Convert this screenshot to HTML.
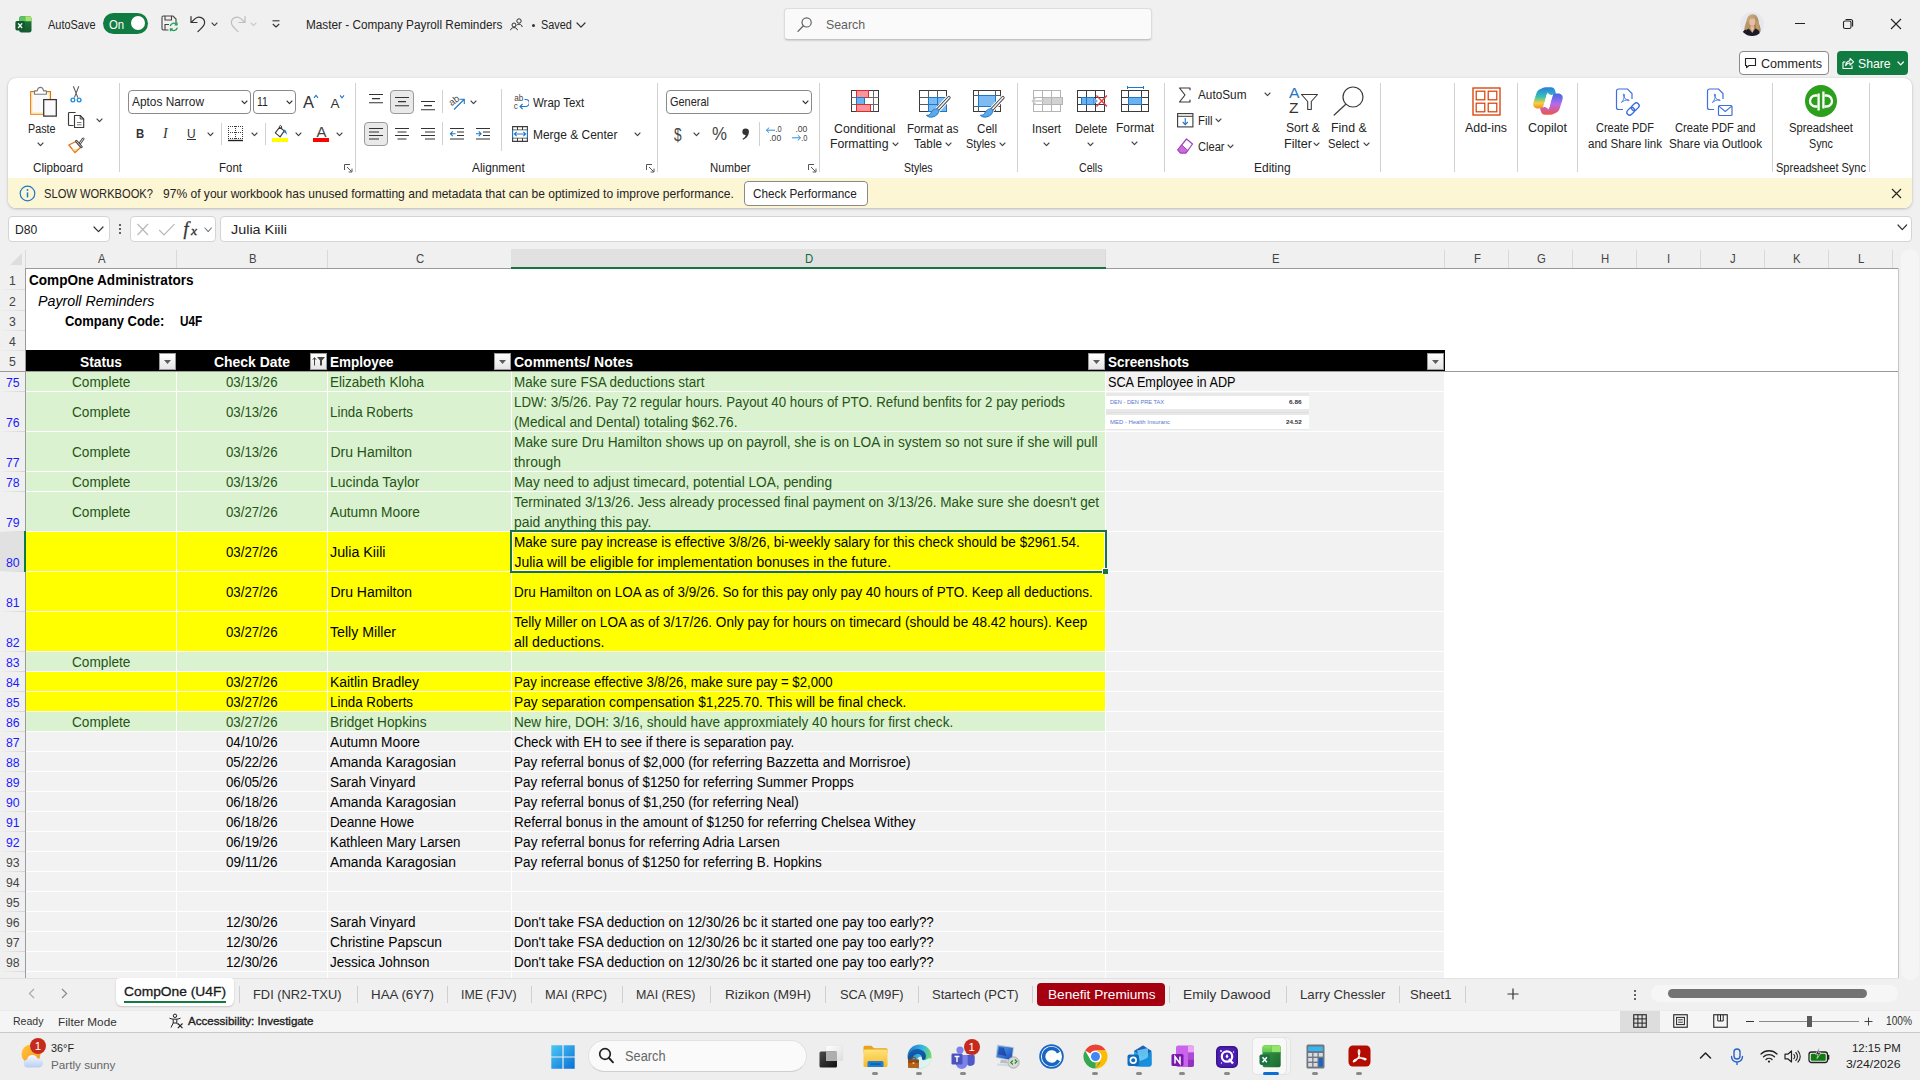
<!DOCTYPE html>
<html><head><meta charset="utf-8"><title>Excel</title><style>
html,body{margin:0;padding:0;}
body{width:1920px;height:1080px;overflow:hidden;background:#F0F0F0;position:relative;font-family:"Liberation Sans",sans-serif;}
.b{position:absolute;display:block;}
.t{position:absolute;white-space:nowrap;transform-origin:0 50%;}
</style></head><body>
<!-- title -->
<svg class="b" style="left:15px;top:15.5px;" width="17" height="17" viewBox="0 0 17 17">
<defs><linearGradient id="xlg" x1="0" y1="0" x2="0" y2="1"><stop offset="0" stop-color="#21803F"/><stop offset="1" stop-color="#17582F"/></linearGradient></defs>
<rect x="4.2" y="0.3" width="12.3" height="16.2" rx="2.2" fill="url(#xlg)"/>
<path d="M4.2 2.500A2.200 2.200 0 0 1 6.400 0.300H10.300V5.300H4.200Z" fill="#5DC466"/>
<path d="M10.300 0.300H14.300A2.200 2.200 0 0 1 16.500 2.500V5.300H10.300Z" fill="#A9E26E"/>
<rect x="0.400" y="5" width="9.400" height="9.400" rx="1.600" fill="#0F5B2E"/>
<path d="M3.100 7.400L7.100 12M7.100 7.400L3.100 12" stroke="#fff" stroke-width="1.350"/>
</svg>
<div class="t" style="left:48.00px;top:18px;font-size:12px;line-height:15px;color:#242424;transform:scaleX(0.9128);">AutoSave</div>
<div class="b" style="left:103px;top:13px;width:45px;height:21px;background:#107C41;border-radius:10.5px;"></div>
<div class="t" style="left:109.40px;top:17px;font-size:12.6px;line-height:16px;color:#fff;transform:scaleX(0.9043);">On</div>
<div class="b" style="left:131.3px;top:16px;width:14px;height:14px;background:#fff;border-radius:7px;"></div>
<svg class="b" style="left:160px;top:14px;" width="20" height="20" viewBox="0 0 20 20">
<path d="M2 3.2A1.2 1.2 0 0 1 3.2 2H13L16 5V9" fill="none" stroke="#444" stroke-width="1.1"/>
<path d="M2 3.2V14.8A1.2 1.2 0 0 0 3.2 16H8.5" fill="none" stroke="#444" stroke-width="1.1"/>
<path d="M5 2V6H11.5V2" fill="none" stroke="#444" stroke-width="1.1"/>
<path d="M5 16V10.5H9" fill="none" stroke="#444" stroke-width="1.1"/>
<path d="M10.2 12.2A3.6 3.6 0 0 1 16.6 10.6M17 8.6V10.9H14.7" fill="none" stroke="#1E9E55" stroke-width="1.3"/>
<path d="M17.3 13.6A3.6 3.6 0 0 1 10.9 15.2M10.5 17.2V14.9H12.8" fill="none" stroke="#1E9E55" stroke-width="1.3"/>
</svg>
<svg class="b" style="left:189px;top:14px;" width="18" height="20" viewBox="0 0 18 20"><path d="M2 2.5V8.5H8" fill="none" stroke="#333" stroke-width="1.2" stroke-linecap="round" stroke-linejoin="round"/><path d="M2.3 8.2L6.2 4.6A5.6 5.6 0 0 1 15.6 8.8C15.6 12 13 13.6 9 17.5" fill="none" stroke="#333" stroke-width="1.2" stroke-linecap="round"/></svg>
<svg class="b" style="left:211.0px;top:21.5px;" width="7" height="4.6" viewBox="0 0 7 4.6"><path d="M1 1L3.5 3.6L6 1" fill="none" stroke="#444" stroke-width="1.1" stroke-linecap="round" stroke-linejoin="round"/></svg>
<svg class="b" style="left:229px;top:14px;" width="18" height="20" viewBox="0 0 18 20"><path d="M16 2.5V8.5H10" fill="none" stroke="#BDBDBD" stroke-width="1.2" stroke-linecap="round" stroke-linejoin="round"/><path d="M15.7 8.2L11.8 4.6A5.6 5.6 0 0 0 2.4 8.8C2.4 12 5 13.6 9 17.5" fill="none" stroke="#BDBDBD" stroke-width="1.2" stroke-linecap="round"/></svg>
<svg class="b" style="left:250.0px;top:21.5px;" width="7" height="4.6" viewBox="0 0 7 4.6"><path d="M1 1L3.5 3.6L6 1" fill="none" stroke="#C8C8C8" stroke-width="1.1" stroke-linecap="round" stroke-linejoin="round"/></svg>
<svg class="b" style="left:270px;top:19px;" width="12" height="10" viewBox="0 0 12 10"><path d="M2.5 1.8H9.5" stroke="#333" stroke-width="1.1"/><path d="M2.8 5L6 8L9.2 5" fill="none" stroke="#333" stroke-width="1.1" stroke-linejoin="round"/></svg>
<div class="t" style="left:305.50px;top:18px;font-size:12.0px;line-height:15px;color:#242424;transform:scaleX(0.9812);">Master - Company Payroll Reminders</div>
<svg class="b" style="left:509px;top:17px;" width="15" height="14" viewBox="0 0 15 14"><circle cx="10" cy="4" r="2.2" fill="none" stroke="#333" stroke-width="1"/><path d="M7.6 8.5C8.2 7.6 9 7.2 10 7.2C12 7.2 13 8.6 13.2 10" fill="none" stroke="#333" stroke-width="1"/><circle cx="5" cy="8" r="2" fill="none" stroke="#333" stroke-width="1"/><path d="M1.6 13.2C1.8 11.4 3.2 10.6 5 10.6C6.8 10.6 8.2 11.4 8.4 13.2" fill="none" stroke="#333" stroke-width="1"/></svg>
<div class="b" style="left:531.5px;top:24px;width:3px;height:3px;background:#333;border-radius:2px;"></div>
<div class="t" style="left:541.00px;top:18px;font-size:12.0px;line-height:15px;color:#242424;transform:scaleX(0.9052);">Saved</div>
<svg class="b" style="left:576.4px;top:21.7px;" width="10" height="6.2" viewBox="0 0 10 6.2"><path d="M1 1L5.0 5.2L9 1" fill="none" stroke="#333" stroke-width="1.2" stroke-linecap="round" stroke-linejoin="round"/></svg>
<div class="b" style="left:784px;top:8px;width:368px;height:32px;background:#FAFAFA;border:1px solid #DDD;border-bottom-color:#C4C4C4;border-radius:4px;box-sizing:border-box;box-shadow:0 1px 1.5px rgba(0,0,0,0.12);"></div>
<svg class="b" style="left:796px;top:16px;" width="18" height="17" viewBox="0 0 18 17"><circle cx="10.6" cy="6.4" r="4.6" fill="none" stroke="#616161" stroke-width="1.2"/><path d="M7.4 9.8L2 15.4" stroke="#616161" stroke-width="1.3" stroke-linecap="round"/></svg>
<div class="t" style="left:825.80px;top:16px;font-size:13.4px;line-height:17px;color:#616161;transform:scaleX(0.9233);">Search</div>
<svg class="b" style="left:1740px;top:12px;" width="24" height="24" viewBox="0 0 24 24"><defs><clipPath id="av"><circle cx="12" cy="12" r="12"/></clipPath>
<linearGradient id="hr" x1="0" y1="0" x2="1" y2="1"><stop offset="0" stop-color="#D6B682"/><stop offset="1" stop-color="#8E6E48"/></linearGradient></defs>
<g clip-path="url(#av)"><rect width="24" height="24" fill="#E7E8EF"/>
<path d="M4.500 20C3.800 16 5 13 6.200 10C7 5 9 2.200 12.600 2.200C16.500 2.200 18.300 5.500 18.600 9.500C19 13 21 15 20.500 19.500L15 21L9 21Z" fill="url(#hr)"/>
<ellipse cx="12.300" cy="9.800" rx="3" ry="4" fill="#E6BEA6"/>
<path d="M8.900 8.600C9.400 5.400 14.400 4.400 15.700 8.200C14.200 6.800 11.200 6.600 8.900 8.600Z" fill="#CDAA78"/>
<path d="M10.800 13.200H13.800L14.200 17H10.400Z" fill="#DDB199"/>
<path d="M1.500 24C2 19.500 4.500 17.600 8.600 16.600L12.300 21L15.400 16.400C18.500 17.400 20 19.500 20.500 24Z" fill="#1A1B27"/>
<path d="M10.300 15.600L12.300 20.400L14.300 15.400Z" fill="#E6BEA6"/>
<path d="M6.200 10C5.500 13.500 6.800 15.500 6 18.500L8.600 16.600C8.200 14 8.600 12 8.900 9.500Z" fill="#B99563" opacity="0.900"/>
<path d="M15.800 9C16.200 12 15.600 14 16.200 16.600L19.800 18.500C20 15.500 18.600 13 18.600 9.500Z" fill="#C19D6A" opacity="0.900"/></g></svg>
<div class="b" style="left:1795px;top:23px;width:10px;height:1px;background:#222;"></div>
<svg class="b" style="left:1842px;top:18px;" width="12" height="12" viewBox="0 0 12 12"><rect x="1.5" y="3" width="7.5" height="7.5" rx="1.6" fill="none" stroke="#222" stroke-width="1.1"/><path d="M3.6 1.5H8.6A2 2 0 0 1 10.6 3.5V8.5" fill="none" stroke="#222" stroke-width="1.1"/></svg>
<svg class="b" style="left:1890px;top:18px;" width="12" height="12" viewBox="0 0 12 12"><path d="M1 1L11 11M11 1L1 11" stroke="#222" stroke-width="1.1"/></svg>
<div class="b" style="left:1739px;top:51px;width:90px;height:24px;background:#fff;border:1px solid #8A8A8A;border-radius:4px;box-sizing:border-box;"></div>
<svg class="b" style="left:1743.5px;top:57px;" width="13" height="12" viewBox="0 0 13 12"><path d="M1.5 1.5H11.5V8.5H5L2.6 10.6V8.5H1.5Z" fill="none" stroke="#222" stroke-width="1.1" stroke-linejoin="round"/></svg>
<div class="t" style="left:1760.60px;top:55px;font-size:13.4px;line-height:17px;color:#242424;transform:scaleX(0.9416);">Comments</div>
<div class="b" style="left:1837px;top:51px;width:71px;height:24px;background:#107C41;border-radius:4px;"></div>
<svg class="b" style="left:1841px;top:56px;" width="14" height="14" viewBox="0 0 14 14"><path d="M2 6V12.5H11V9.5" fill="none" stroke="#fff" stroke-width="1.1"/><path d="M2 6H4.4" stroke="#fff" stroke-width="1.1"/><path d="M4.6 9.6C5 6.6 6.6 5 9 4.8V2.4L12.6 5.8L9 9.2V6.8C7.2 6.9 5.8 7.8 4.6 9.6Z" fill="none" stroke="#fff" stroke-width="1.05" stroke-linejoin="round"/></svg>
<div class="t" style="left:1858.00px;top:55px;font-size:13.4px;line-height:17px;color:#fff;transform:scaleX(0.9117);">Share</div>
<svg class="b" style="left:1896.8999999999999px;top:61.2px;" width="7.4" height="4.8" viewBox="0 0 7.4 4.8"><path d="M1 1L3.7 3.8L6.4 1" fill="none" stroke="#fff" stroke-width="1.2" stroke-linecap="round" stroke-linejoin="round"/></svg>
<!-- ribbon -->
<div class="b" style="left:8px;top:78px;width:1904px;height:130px;background:#fff;border-radius:8px;box-shadow:0 1px 3px rgba(0,0,0,0.22),0 0 1px rgba(0,0,0,0.15);"></div>
<div class="b" style="left:8px;top:178px;width:1904px;height:30px;background:#FDF6D5;border-radius:0 0 8px 8px;"></div>
<svg class="b" style="left:29px;top:86px;" width="30" height="32" viewBox="0 0 30 32">
<path d="M21.500 13V5.600H1.700V28.200H14.500" fill="#FAFAFA" stroke="#E6720F" stroke-width="1.150"/>
<path d="M20.400 13V6.700H2.800V27.100H14.500" fill="none" stroke="#FBDF98" stroke-width="1.050"/>
<path d="M5.500 8.300V4.900H8.200C8.600 2.500 10 1.400 11.400 1.400C12.800 1.400 14.200 2.500 14.600 4.900H17.400V8.300Z" fill="#fff" stroke="#7A7A7A" stroke-width="1.100" stroke-linejoin="round"/>
<rect x="14.700" y="13.600" width="12.600" height="16.500" fill="#FAFAFA" stroke="#333" stroke-width="1.250"/>
</svg>
<div class="t" style="left:27.50px;top:122px;font-size:12.3px;line-height:15px;color:#242424;transform:scaleX(0.8743);">Paste</div>
<svg class="b" style="left:37.0px;top:142.0px;" width="7" height="4.6" viewBox="0 0 7 4.6"><path d="M1 1L3.5 3.6L6 1" fill="none" stroke="#444" stroke-width="1.1" stroke-linecap="round" stroke-linejoin="round"/></svg>
<svg class="b" style="left:69px;top:85px;" width="14" height="19" viewBox="0 0 14 19"><path d="M4.400 1.200L8.800 12.600M9.800 1.200L5.400 12.600" stroke="#5A5A5A" stroke-width="1.050" fill="none"/><circle cx="3.900" cy="15" r="1.850" fill="none" stroke="#1E8FD8" stroke-width="1.350"/><circle cx="10.100" cy="15" r="1.850" fill="none" stroke="#1E8FD8" stroke-width="1.350"/></svg>
<svg class="b" style="left:67px;top:111px;" width="18" height="18" viewBox="0 0 18 18"><path d="M8.600 1.500H2.400A0.900 0.900 0 0 0 1.500 2.400V13.600A0.900 0.900 0 0 0 2.400 14.500H6.500" fill="none" stroke="#3B3B3B" stroke-width="1.150"/><path d="M7.500 4.500H13.200L16.700 8V16.500H7.500Z" fill="#fff" stroke="#3B3B3B" stroke-width="1.150" stroke-linejoin="round"/><path d="M13.200 4.500V8H16.700" fill="none" stroke="#3B3B3B" stroke-width="1"/><path d="M10 11.500H14.500M10 13.800H14.500" stroke="#6A6A6A" stroke-width="0.900"/></svg>
<svg class="b" style="left:96.0px;top:118.10000000000001px;" width="7" height="4.6" viewBox="0 0 7 4.6"><path d="M1 1L3.5 3.6L6 1" fill="none" stroke="#444" stroke-width="1.1" stroke-linecap="round" stroke-linejoin="round"/></svg>
<svg class="b" style="left:68px;top:137px;" width="17" height="17" viewBox="0 0 17 17"><path d="M0.900 8L7.800 4.500L12.800 10.200L7 15.600Z" fill="#fff" stroke="#E6720F" stroke-width="1.300" stroke-linejoin="round"/><path d="M4.200 12.200L7 14.600L10.200 11.600Z" fill="#FBDF98"/><path d="M15.200 1.800L11.800 6.600" stroke="#4A4A4A" stroke-width="2.600" stroke-linecap="round"/><path d="M15.200 1.800L11.800 6.600" stroke="#F2F2F2" stroke-width="0.900" stroke-linecap="round"/><path d="M8.300 4.200L13.400 9.800" stroke="#4A4A4A" stroke-width="2.600" stroke-linecap="round"/><path d="M8.500 4.400L13.200 9.600" stroke="#DADADA" stroke-width="0.800" stroke-linecap="round"/></svg>
<div class="t" style="left:32.50px;top:161px;font-size:12.3px;line-height:15px;color:#242424;transform:scaleX(0.9497);">Clipboard</div>
<div class="b" style="left:119px;top:83px;width:1px;height:89px;background:#D2D2D2;"></div>
<div class="b" style="left:128px;top:90px;width:123px;height:24px;background:#fff;border:1px solid #8A8A8A;border-radius:4px;box-sizing:border-box;"></div>
<div class="t" style="left:131.80px;top:94px;font-size:12.6px;line-height:16px;color:#242424;transform:scaleX(0.9433);">Aptos Narrow</div>
<svg class="b" style="left:240.8px;top:100.10000000000001px;" width="7" height="4.6" viewBox="0 0 7 4.6"><path d="M1 1L3.5 3.6L6 1" fill="none" stroke="#333" stroke-width="1.1" stroke-linecap="round" stroke-linejoin="round"/></svg>
<div class="b" style="left:253px;top:90px;width:43px;height:24px;background:#fff;border:1px solid #8A8A8A;border-radius:4px;box-sizing:border-box;"></div>
<div class="t" style="left:256.80px;top:94px;font-size:12.6px;line-height:16px;color:#242424;transform:scaleX(0.8257);">11</div>
<svg class="b" style="left:285.8px;top:100.10000000000001px;" width="7" height="4.6" viewBox="0 0 7 4.6"><path d="M1 1L3.5 3.6L6 1" fill="none" stroke="#333" stroke-width="1.1" stroke-linecap="round" stroke-linejoin="round"/></svg>
<div class="t" style="left:303.00px;top:93px;font-size:16px;line-height:20px;color:#333;transform:scaleX(1.0307);">A</div>
<svg class="b" style="left:313.2px;top:94px;" width="6" height="5" viewBox="0 0 6 5"><path d="M1 3.800L3 1.400L5 3.800" fill="none" stroke="#1E78C8" stroke-width="1.1"/></svg>
<div class="t" style="left:330.50px;top:95px;font-size:13.5px;line-height:17px;color:#333;">A</div>
<svg class="b" style="left:339.4px;top:94px;" width="6" height="5" viewBox="0 0 6 5"><path d="M1 1.400L3 3.800L5 1.400" fill="none" stroke="#1E78C8" stroke-width="1.1"/></svg>
<div class="t" style="left:136.20px;top:125px;font-size:13.2px;line-height:17px;color:#333;font-weight:bold;transform:scaleX(0.8602);">B</div>
<div class="t" style="left:163.00px;top:125px;font-size:14px;line-height:18px;color:#333;font-style:italic;font-family:'Liberation Serif',serif;">I</div>
<div class="t" style="left:187.00px;top:126px;font-size:12.6px;line-height:16px;color:#333;transform:scaleX(0.9451);">U</div>
<div class="b" style="left:187px;top:139.2px;width:9px;height:1px;background:#333;"></div>
<svg class="b" style="left:207.0px;top:132.0px;" width="7" height="4.6" viewBox="0 0 7 4.6"><path d="M1 1L3.5 3.6L6 1" fill="none" stroke="#444" stroke-width="1.1" stroke-linecap="round" stroke-linejoin="round"/></svg>
<div class="b" style="left:221px;top:123px;width:1px;height:22px;background:#D2D2D2;"></div>
<svg class="b" style="left:228px;top:126px;" width="16" height="16" viewBox="0 0 16 16"><path d="M0 0.500H15M0 6.500H15M0.500 0V13M7.500 0V13M14.500 0V13M0 12.500H15" stroke="#3B3B3B" stroke-width="1" stroke-dasharray="1 1" fill="none"/><path d="M0 14.500H15" stroke="#222" stroke-width="1.400"/></svg>
<svg class="b" style="left:251.0px;top:132.0px;" width="7" height="4.6" viewBox="0 0 7 4.6"><path d="M1 1L3.5 3.6L6 1" fill="none" stroke="#444" stroke-width="1.1" stroke-linecap="round" stroke-linejoin="round"/></svg>
<div class="b" style="left:265px;top:123px;width:1px;height:22px;background:#D2D2D2;"></div>
<svg class="b" style="left:272px;top:124px;" width="16" height="14" viewBox="0 0 16 14"><path d="M7.500 3.300L12.300 6.900L8.100 12.900L3.300 8.900Z" fill="#fff" stroke="#3B3B3B" stroke-width="1.100" stroke-linejoin="round"/><path d="M7.600 3.300C7.200 1.600 8.600 0.800 9.400 2L9.800 4.800" fill="none" stroke="#3B3B3B" stroke-width="1"/><path d="M11.600 5.600C13.800 5.800 15 7.600 14.600 11C14 9.400 13.200 8.600 12.300 8.400Z" fill="#1E78C8"/></svg>
<div class="b" style="left:272px;top:138px;width:16px;height:4px;background:#FFFF00;"></div>
<svg class="b" style="left:294.8px;top:132.0px;" width="7" height="4.6" viewBox="0 0 7 4.6"><path d="M1 1L3.5 3.6L6 1" fill="none" stroke="#444" stroke-width="1.1" stroke-linecap="round" stroke-linejoin="round"/></svg>
<div class="t" style="left:316.40px;top:122px;font-size:15px;line-height:19px;color:#444;">A</div>
<div class="b" style="left:313px;top:138px;width:16px;height:4px;background:#FF0000;"></div>
<svg class="b" style="left:335.8px;top:132.0px;" width="7" height="4.6" viewBox="0 0 7 4.6"><path d="M1 1L3.5 3.6L6 1" fill="none" stroke="#444" stroke-width="1.1" stroke-linecap="round" stroke-linejoin="round"/></svg>
<div class="t" style="left:218.80px;top:161px;font-size:12.3px;line-height:15px;color:#242424;transform:scaleX(0.9345);">Font</div>
<svg class="b" style="left:344px;top:164px;" width="9" height="9" viewBox="0 0 9 9"><path d="M0.5 6V0.5H6" fill="none" stroke="#555" stroke-width="1"/><path d="M3 3L7.6 7.6M4.6 8H8V4.6" fill="none" stroke="#555" stroke-width="1"/></svg>
<div class="b" style="left:355px;top:83px;width:1px;height:89px;background:#D2D2D2;"></div>
<div class="b" style="left:390px;top:90px;width:24px;height:24px;background:#E9E9E9;border:1px solid #9A9A9A;border-radius:4px;box-sizing:border-box;"></div>
<div class="b" style="left:364px;top:122px;width:24px;height:24px;background:#E9E9E9;border:1px solid #9A9A9A;border-radius:4px;box-sizing:border-box;"></div>
<svg class="b" style="left:368px;top:92px;" width="16" height="14" viewBox="0 0 16 14"><path d="M1 2.5H15M4 6.6H12M1 10.7H15" stroke="#333" stroke-width="1.1" fill="none"/></svg>
<svg class="b" style="left:394px;top:95px;" width="16" height="14" viewBox="0 0 16 14"><path d="M1 2.5H15M4 6.6H12M1 10.7H15" stroke="#333" stroke-width="1.1" fill="none"/></svg>
<svg class="b" style="left:420px;top:99px;" width="16" height="14" viewBox="0 0 16 14"><path d="M1 2.5H15M4 6.6H12M1 10.7H15" stroke="#333" stroke-width="1.1" fill="none"/></svg>
<div class="b" style="left:442px;top:90px;width:1px;height:23px;background:#D2D2D2;"></div>
<svg class="b" style="left:448px;top:92px;" width="19" height="20" viewBox="0 0 19 20"><g transform="rotate(-38 7 8)"><text x="0.500" y="11" font-family="Liberation Sans" font-size="9.5" fill="#444">ab</text></g><path d="M6 17.500L16 7.500M11.500 7.200H16.300V12" fill="none" stroke="#1E78C8" stroke-width="1.1"/></svg>
<svg class="b" style="left:470.0px;top:100.10000000000001px;" width="7" height="4.6" viewBox="0 0 7 4.6"><path d="M1 1L3.5 3.6L6 1" fill="none" stroke="#444" stroke-width="1.1" stroke-linecap="round" stroke-linejoin="round"/></svg>
<div class="b" style="left:501px;top:89px;width:1px;height:62px;background:#D2D2D2;"></div>
<svg class="b" style="left:513px;top:94px;" width="16" height="17" viewBox="0 0 16 17"><text x="1.200" y="7" font-family="Liberation Sans" font-size="8.200" fill="#444">ab</text><text x="0.800" y="14.600" font-family="Liberation Sans" font-size="8.200" fill="#444">c</text><path d="M11.500 5.500H12.800A2.300 2.300 0 0 1 12.800 12.500H7.200M9.600 10L7 12.500L9.600 15" fill="none" stroke="#1E78C8" stroke-width="1.1"/></svg>
<div class="t" style="left:532.60px;top:96px;font-size:12.3px;line-height:15px;color:#242424;transform:scaleX(0.9323);">Wrap Text</div>
<svg class="b" style="left:368px;top:127px;" width="16" height="14" viewBox="0 0 16 14"><path d="M1 1.5H15M1 5H11M1 8.5H15M1 12H11" stroke="#333" stroke-width="1.1" fill="none"/></svg>
<svg class="b" style="left:394px;top:127px;" width="16" height="14" viewBox="0 0 16 14"><path d="M1 1.5H15M3.5 5H12.5M1 8.5H15M3.5 12H12.5" stroke="#333" stroke-width="1.1" fill="none"/></svg>
<svg class="b" style="left:420px;top:127px;" width="16" height="14" viewBox="0 0 16 14"><path d="M1 1.5H15M5 5H15M1 8.5H15M5 12H15" stroke="#333" stroke-width="1.1" fill="none"/></svg>
<div class="b" style="left:442px;top:122px;width:1px;height:23px;background:#D2D2D2;"></div>
<svg class="b" style="left:449px;top:127px;" width="16" height="14" viewBox="0 0 16 14"><path d="M1 1.5H15M8 5H15M8 8.5H15M1 12H15" stroke="#333" stroke-width="1.1" fill="none"/><path d="M6.500 6.750H1.500M3.800 4.400L1.400 6.750L3.800 9.100" fill="none" stroke="#1E78C8" stroke-width="1.1"/></svg>
<svg class="b" style="left:475px;top:127px;" width="16" height="14" viewBox="0 0 16 14"><path d="M1 1.5H15M8 5H15M8 8.5H15M1 12H15" stroke="#333" stroke-width="1.1" fill="none"/><path d="M1 6.750H6M3.700 4.400L6.100 6.750L3.700 9.100" fill="none" stroke="#1E78C8" stroke-width="1.1"/></svg>
<svg class="b" style="left:511.5px;top:125.5px;" width="16" height="16" viewBox="0 0 16 16"><path d="M0.600 0.600H15.400V15.400H0.600Z" fill="#fff" stroke="#3B3B3B" stroke-width="1.1"/><path d="M0.600 4H15.400M0.600 12H15.400M5.500 0.600V4M10.500 0.600V4M5.500 12V15.400M10.500 12V15.400" stroke="#3B3B3B" stroke-width="1" fill="none"/><rect x="1.200" y="4.500" width="13.600" height="7" fill="#fff"/><path d="M2.400 8H13.600M4.600 5.800L2.400 8L4.600 10.200M11.400 5.800L13.600 8L11.400 10.200" fill="none" stroke="#1E78C8" stroke-width="1.1"/><path d="M0.600 4V12M15.400 4V12" stroke="#1E78C8" stroke-width="1.1"/></svg>
<div class="t" style="left:532.60px;top:128px;font-size:12.3px;line-height:15px;color:#242424;transform:scaleX(0.9721);">Merge &amp; Center</div>
<svg class="b" style="left:634.1px;top:132.0px;" width="7" height="4.6" viewBox="0 0 7 4.6"><path d="M1 1L3.5 3.6L6 1" fill="none" stroke="#444" stroke-width="1.1" stroke-linecap="round" stroke-linejoin="round"/></svg>
<div class="t" style="left:472.00px;top:161px;font-size:12.3px;line-height:15px;color:#242424;transform:scaleX(0.9635);">Alignment</div>
<svg class="b" style="left:646px;top:164px;" width="9" height="9" viewBox="0 0 9 9"><path d="M0.5 6V0.5H6" fill="none" stroke="#555" stroke-width="1"/><path d="M3 3L7.6 7.6M4.6 8H8V4.6" fill="none" stroke="#555" stroke-width="1"/></svg>
<div class="b" style="left:657px;top:83px;width:1px;height:89px;background:#D2D2D2;"></div>
<div class="b" style="left:666px;top:90px;width:146px;height:24px;background:#fff;border:1px solid #8A8A8A;border-radius:4px;box-sizing:border-box;"></div>
<div class="t" style="left:669.70px;top:94px;font-size:12.6px;line-height:16px;color:#242424;transform:scaleX(0.8700);">General</div>
<svg class="b" style="left:801.5px;top:100.10000000000001px;" width="7" height="4.6" viewBox="0 0 7 4.6"><path d="M1 1L3.5 3.6L6 1" fill="none" stroke="#333" stroke-width="1.1" stroke-linecap="round" stroke-linejoin="round"/></svg>
<div class="t" style="left:673.60px;top:123px;font-size:18.5px;line-height:23px;color:#444;transform:scaleX(0.7387);">$</div>
<svg class="b" style="left:692.5px;top:132.0px;" width="7" height="4.6" viewBox="0 0 7 4.6"><path d="M1 1L3.5 3.6L6 1" fill="none" stroke="#444" stroke-width="1.1" stroke-linecap="round" stroke-linejoin="round"/></svg>
<div class="t" style="left:711.50px;top:123px;font-size:17.5px;line-height:22px;color:#444;transform:scaleX(0.9640);">%</div>
<svg class="b" style="left:741px;top:128px;" width="9" height="13" viewBox="0 0 9 13"><path d="M4.600 0.500A3.300 3.300 0 0 1 7.900 3.800C7.900 7.500 5.200 10.500 2 11.800L1.500 10.800C3.500 9.800 4.600 8.400 4.700 7.100A3.300 3.300 0 0 1 4.600 0.500Z" fill="#333"/></svg>
<div class="b" style="left:759px;top:122px;width:1px;height:24px;background:#D2D2D2;"></div>
<svg class="b" style="left:765px;top:125px;" width="18" height="18" viewBox="0 0 18 18"><path d="M10 5.200H1.500M4.200 2.600L1.400 5.200L4.200 7.800" fill="none" stroke="#2B8FDA" stroke-width="1"/><text x="10.400" y="7.400" font-family="Liberation Sans" font-size="8.800" fill="#444" textLength="6.200" lengthAdjust="spacingAndGlyphs">.0</text><text x="4.200" y="15.800" font-family="Liberation Sans" font-size="8.800" fill="#444" textLength="12" lengthAdjust="spacingAndGlyphs">.00</text></svg>
<svg class="b" style="left:791px;top:125px;" width="18" height="18" viewBox="0 0 18 18"><text x="4.400" y="7.400" font-family="Liberation Sans" font-size="8.800" fill="#444" textLength="12" lengthAdjust="spacingAndGlyphs">.00</text><path d="M1 12.800H9.500M6.800 10.200L9.600 12.800L6.800 15.400" fill="none" stroke="#2B8FDA" stroke-width="1"/><text x="10.200" y="15.800" font-family="Liberation Sans" font-size="8.800" fill="#444" textLength="6.200" lengthAdjust="spacingAndGlyphs">.0</text></svg>
<div class="t" style="left:710.40px;top:161px;font-size:12.3px;line-height:15px;color:#242424;transform:scaleX(0.9281);">Number</div>
<svg class="b" style="left:808px;top:164px;" width="9" height="9" viewBox="0 0 9 9"><path d="M0.5 6V0.5H6" fill="none" stroke="#555" stroke-width="1"/><path d="M3 3L7.6 7.6M4.6 8H8V4.6" fill="none" stroke="#555" stroke-width="1"/></svg>
<div class="b" style="left:819px;top:83px;width:1px;height:89px;background:#D2D2D2;"></div>
<svg class="b" style="left:851px;top:90px;" width="28" height="22" viewBox="0 0 28 22"><rect x="0.5" y="0.5" width="27" height="21" fill="#fff" stroke="#3B3B3B"/>
<path d="M5.5 0.5V21.5M17.5 0.5V21.5M22.5 0.5V21.5M0.5 7.5H27.5M0.5 14.5H27.5" stroke="#6A6A6A" stroke-width="1" fill="none"/>
<rect x="5.5" y="0.5" width="12" height="7" fill="#F9939C" stroke="#E02B2B"/>
<rect x="13.5" y="8" width="8.5" height="6" fill="#fff"/>
<rect x="5.5" y="7.5" width="8" height="7" fill="#6CB2EE" stroke="#1E78C8"/>
<rect x="5.5" y="14.5" width="14" height="7" fill="#F9939C" stroke="#E02B2B"/></svg>
<div class="t" style="left:834.00px;top:122px;font-size:12.3px;line-height:15px;color:#242424;">Conditional</div>
<div class="t" style="left:830.00px;top:137px;font-size:12.3px;line-height:15px;color:#242424;transform:scaleX(0.9951);">Formatting</div>
<svg class="b" style="left:892.1px;top:142.29999999999998px;" width="7" height="4.6" viewBox="0 0 7 4.6"><path d="M1 1L3.5 3.6L6 1" fill="none" stroke="#444" stroke-width="1.1" stroke-linecap="round" stroke-linejoin="round"/></svg>
<svg class="b" style="left:919px;top:90px;" width="33" height="29" viewBox="0 0 33 29"><rect x="0.5" y="0.5" width="27" height="21" fill="#fff" stroke="#3B3B3B"/><path d="M0.5 7.5H27.5M0.5 14.5H9.5M9.5 0.5V21.5M18.5 0.5V7.5" stroke="#5A5A5A" stroke-width="1" fill="none"/><rect x="9.5" y="7.5" width="18" height="14" fill="#7DBBF0" stroke="#1E78C8"/><path d="M9.5 14.5H27.5M18.5 7.5V21.5" stroke="#1E78C8" stroke-width="1" fill="none"/><path d="M30 7.600L18.600 19.800" stroke="#fff" stroke-width="5.400" stroke-linecap="round" fill="none"/><path d="M30 7.600L18.400 20" stroke="#4A4A4A" stroke-width="3.300" stroke-linecap="round" fill="none"/><path d="M30 7.600L18.400 20" stroke="#F4F4F4" stroke-width="1.500" stroke-linecap="round" fill="none"/><path d="M19.400 19.400C20.600 22 18.400 26 13.400 27C10.800 27.500 8.600 26.700 7.400 25.300C10.400 25.500 11.500 24 12.400 22C13.500 19.600 17 18 19.400 19.400Z" fill="#5BA8EA" stroke="#1E78C8" stroke-width="1"/></svg>
<div class="t" style="left:907.40px;top:122px;font-size:12.3px;line-height:15px;color:#242424;transform:scaleX(0.9284);">Format as</div>
<div class="t" style="left:914.00px;top:137px;font-size:12.3px;line-height:15px;color:#242424;transform:scaleX(0.9522);">Table</div>
<svg class="b" style="left:945.0px;top:142.29999999999998px;" width="7" height="4.6" viewBox="0 0 7 4.6"><path d="M1 1L3.5 3.6L6 1" fill="none" stroke="#444" stroke-width="1.1" stroke-linecap="round" stroke-linejoin="round"/></svg>
<svg class="b" style="left:973px;top:90px;" width="33" height="29" viewBox="0 0 33 29"><rect x="0.5" y="0.5" width="27" height="21" fill="#fff" stroke="#3B3B3B"/><path d="M0.5 5.5H27.5M0.5 16.5H27.5M5.5 0.5V21.5M22.5 0.5V21.5" stroke="#5A5A5A" stroke-width="1" fill="none"/><rect x="5.5" y="5.5" width="17" height="11" fill="#7DBBF0" stroke="#1E78C8"/><path d="M30 7.600L18.600 19.800" stroke="#fff" stroke-width="5.400" stroke-linecap="round" fill="none"/><path d="M30 7.600L18.400 20" stroke="#4A4A4A" stroke-width="3.300" stroke-linecap="round" fill="none"/><path d="M30 7.600L18.400 20" stroke="#F4F4F4" stroke-width="1.500" stroke-linecap="round" fill="none"/><path d="M19.400 19.400C20.600 22 18.400 26 13.400 27C10.800 27.500 8.600 26.700 7.400 25.300C10.400 25.500 11.500 24 12.400 22C13.500 19.600 17 18 19.400 19.400Z" fill="#5BA8EA" stroke="#1E78C8" stroke-width="1"/></svg>
<div class="t" style="left:977.00px;top:122px;font-size:12.3px;line-height:15px;color:#242424;transform:scaleX(0.9439);">Cell</div>
<div class="t" style="left:966.00px;top:137px;font-size:12.3px;line-height:15px;color:#242424;transform:scaleX(0.8837);">Styles</div>
<svg class="b" style="left:999.0px;top:142.29999999999998px;" width="7" height="4.6" viewBox="0 0 7 4.6"><path d="M1 1L3.5 3.6L6 1" fill="none" stroke="#444" stroke-width="1.1" stroke-linecap="round" stroke-linejoin="round"/></svg>
<div class="t" style="left:904.00px;top:161px;font-size:12.3px;line-height:15px;color:#242424;transform:scaleX(0.8539);">Styles</div>
<div class="b" style="left:1017px;top:83px;width:1px;height:89px;background:#D2D2D2;"></div>
<svg class="b" style="left:1031px;top:90px;" width="33" height="22" viewBox="0 0 33 22"><rect x="2.5" y="0.5" width="27" height="21" fill="#fff" stroke="#B4B4B4"/><path d="M2.5 7.5H29.5M2.5 14.5H29.5M11.5 0.5V21.5M20.5 0.5V21.5" stroke="#B4B4B4" stroke-width="1" fill="none"/><rect x="11.5" y="7.5" width="20" height="7" fill="#D2D2D2" stroke="#B4B4B4"/><path d="M20.5 7.5V14.5" stroke="#B4B4B4" stroke-width="1" fill="none"/><path d="M13 11H1.500M5.500 7L1.300 11L5.500 15" fill="none" stroke="#C8C8C8" stroke-width="1.300"/></svg>
<div class="t" style="left:1032.00px;top:122px;font-size:12.3px;line-height:15px;color:#242424;transform:scaleX(0.9427);">Insert</div>
<svg class="b" style="left:1042.7px;top:142.39999999999998px;" width="7" height="4.6" viewBox="0 0 7 4.6"><path d="M1 1L3.5 3.6L6 1" fill="none" stroke="#444" stroke-width="1.1" stroke-linecap="round" stroke-linejoin="round"/></svg>
<svg class="b" style="left:1077px;top:90px;" width="32" height="22" viewBox="0 0 32 22"><rect x="0.5" y="0.5" width="27" height="21" fill="#fff" stroke="#3B3B3B"/><path d="M0.5 7.5H27.5M0.5 14.5H27.5M9.5 0.5V21.5M18.5 0.5V21.5" stroke="#3B3B3B" stroke-width="1" fill="none"/><rect x="4.5" y="7.5" width="12" height="7" fill="#6CB2EE" stroke="#1E78C8"/><path d="M9.5 7.5V14.5" stroke="#1E78C8" fill="none"/><path d="M16.5 7.2L21 11L16.5 14.800Z" fill="#6CB2EE"/><path d="M19.5 5.500L30 16.500M30 5.500L19.500 16.500" stroke="#E03A3A" stroke-width="1.300"/></svg>
<div class="t" style="left:1074.60px;top:122px;font-size:12.3px;line-height:15px;color:#242424;transform:scaleX(0.9085);">Delete</div>
<svg class="b" style="left:1086.7px;top:142.39999999999998px;" width="7" height="4.6" viewBox="0 0 7 4.6"><path d="M1 1L3.5 3.6L6 1" fill="none" stroke="#444" stroke-width="1.1" stroke-linecap="round" stroke-linejoin="round"/></svg>
<svg class="b" style="left:1121px;top:85px;" width="30" height="27" viewBox="0 0 30 27"><path d="M6.500 1V4M22.500 1V4M6.500 2.500H22.500" stroke="#1E78C8" stroke-width="1" fill="none"/><rect x="0.5" y="5.5" width="27" height="21" fill="#fff" stroke="#3B3B3B"/><path d="M0.5 12.5H27.5M0.5 19.5H27.5M7.5 5.5V26.5M20.5 5.5V26.5" stroke="#3B3B3B" stroke-width="1" fill="none"/><rect x="7.5" y="12.5" width="13" height="7" fill="#6CB2EE" stroke="#1E78C8"/></svg>
<div class="t" style="left:1116.00px;top:121px;font-size:12.3px;line-height:15px;color:#242424;transform:scaleX(0.9755);">Format</div>
<svg class="b" style="left:1131.1px;top:141.39999999999998px;" width="7" height="4.6" viewBox="0 0 7 4.6"><path d="M1 1L3.5 3.6L6 1" fill="none" stroke="#444" stroke-width="1.1" stroke-linecap="round" stroke-linejoin="round"/></svg>
<div class="t" style="left:1079.00px;top:161px;font-size:12.3px;line-height:15px;color:#242424;transform:scaleX(0.8596);">Cells</div>
<div class="b" style="left:1164px;top:83px;width:1px;height:89px;background:#D2D2D2;"></div>
<svg class="b" style="left:1178px;top:87px;" width="14" height="16" viewBox="0 0 14 16"><path d="M12 3.200V1H1.500L7 8L1.500 15H12V12.800" fill="none" stroke="#3B3B3B" stroke-width="1.200" stroke-linejoin="round"/></svg>
<div class="t" style="left:1197.50px;top:88px;font-size:12.3px;line-height:15px;color:#242424;transform:scaleX(0.9586);">AutoSum</div>
<svg class="b" style="left:1263.8px;top:92.3px;" width="7" height="4.6" viewBox="0 0 7 4.6"><path d="M1 1L3.5 3.6L6 1" fill="none" stroke="#444" stroke-width="1.1" stroke-linecap="round" stroke-linejoin="round"/></svg>
<svg class="b" style="left:1176.5px;top:113px;" width="17" height="15" viewBox="0 0 17 15"><rect x="0.600" y="0.600" width="15.300" height="13.300" fill="#fff" stroke="#3B3B3B" stroke-width="1.100"/><path d="M0.600 3.300H15.900" stroke="#3B3B3B" stroke-width="1"/><path d="M8.250 5V11.500M5.700 9L8.250 11.600L10.800 9" fill="none" stroke="#1E78C8" stroke-width="1.100"/></svg>
<div class="t" style="left:1197.50px;top:114px;font-size:12.3px;line-height:15px;color:#242424;transform:scaleX(0.9229);">Fill</div>
<svg class="b" style="left:1214.8px;top:118.3px;" width="7" height="4.6" viewBox="0 0 7 4.6"><path d="M1 1L3.5 3.6L6 1" fill="none" stroke="#444" stroke-width="1.1" stroke-linecap="round" stroke-linejoin="round"/></svg>
<svg class="b" style="left:1176.5px;top:138px;" width="17" height="17" viewBox="0 0 17 17"><path d="M9.500 1L15.500 6L9 15L3.500 15L0.800 11.800Z" fill="#fff" stroke="#A33BC2" stroke-width="1.200" stroke-linejoin="round"/><path d="M4.600 7L10.800 12.400L9 15H3.500L0.800 11.800Z" fill="#C86DD7" stroke="#A33BC2" stroke-width="1" stroke-linejoin="round"/></svg>
<div class="t" style="left:1197.50px;top:140px;font-size:12.3px;line-height:15px;color:#242424;transform:scaleX(0.9016);">Clear</div>
<svg class="b" style="left:1227.3px;top:144.29999999999998px;" width="7" height="4.6" viewBox="0 0 7 4.6"><path d="M1 1L3.5 3.6L6 1" fill="none" stroke="#444" stroke-width="1.1" stroke-linecap="round" stroke-linejoin="round"/></svg>
<div class="t" style="left:1288.50px;top:84px;font-size:14.5px;line-height:18px;color:#1E78C8;transform:scaleX(1.0857);">A</div>
<div class="t" style="left:1288.80px;top:99px;font-size:14.5px;line-height:18px;color:#333;transform:scaleX(1.0726);">Z</div>
<svg class="b" style="left:1300px;top:93px;" width="19" height="18" viewBox="0 0 19 18"><path d="M1.500 1.500H17.500L11.300 8.500V16.500H7.700V8.500Z" fill="#fff" stroke="#3B3B3B" stroke-width="1.100" stroke-linejoin="round"/></svg>
<div class="t" style="left:1286.00px;top:121px;font-size:12.3px;line-height:15px;color:#242424;transform:scaleX(0.9889);">Sort &amp;</div>
<div class="t" style="left:1284.00px;top:137px;font-size:12.3px;line-height:15px;color:#242424;transform:scaleX(1.0207);">Filter</div>
<svg class="b" style="left:1313.2px;top:141.7px;" width="7" height="4.6" viewBox="0 0 7 4.6"><path d="M1 1L3.5 3.6L6 1" fill="none" stroke="#444" stroke-width="1.1" stroke-linecap="round" stroke-linejoin="round"/></svg>
<svg class="b" style="left:1333px;top:86px;" width="32" height="30" viewBox="0 0 32 30"><circle cx="20" cy="11" r="10" fill="none" stroke="#3B3B3B" stroke-width="1.200"/><path d="M12.800 18.200L1.200 29" stroke="#3B3B3B" stroke-width="1.200" stroke-linecap="round"/></svg>
<div class="t" style="left:1331.00px;top:121px;font-size:12.3px;line-height:15px;color:#242424;transform:scaleX(1.0042);">Find &amp;</div>
<div class="t" style="left:1328.00px;top:137px;font-size:12.3px;line-height:15px;color:#242424;transform:scaleX(0.9068);">Select</div>
<svg class="b" style="left:1362.5px;top:141.7px;" width="7" height="4.6" viewBox="0 0 7 4.6"><path d="M1 1L3.5 3.6L6 1" fill="none" stroke="#444" stroke-width="1.1" stroke-linecap="round" stroke-linejoin="round"/></svg>
<div class="t" style="left:1254.00px;top:161px;font-size:12.3px;line-height:15px;color:#242424;transform:scaleX(0.9732);">Editing</div>
<div class="b" style="left:1380px;top:83px;width:1px;height:89px;background:#D2D2D2;"></div>
<div class="b" style="left:1454px;top:83px;width:1px;height:89px;background:#D2D2D2;"></div>
<div class="b" style="left:1517px;top:83px;width:1px;height:89px;background:#D2D2D2;"></div>
<div class="b" style="left:1577px;top:83px;width:1px;height:89px;background:#D2D2D2;"></div>
<div class="b" style="left:1772px;top:83px;width:1px;height:89px;background:#D2D2D2;"></div>
<div class="b" style="left:1869px;top:83px;width:1px;height:89px;background:#D2D2D2;"></div>
<svg class="b" style="left:1471.5px;top:86.5px;" width="29" height="29" viewBox="0 0 29 29"><rect x="1" y="1" width="27" height="27" fill="#fff" stroke="#D83B01" stroke-width="1.300"/><rect x="4.200" y="4.200" width="8.600" height="8.600" fill="none" stroke="#D83B01" stroke-width="1.200"/><rect x="16.200" y="4.200" width="8.600" height="8.600" fill="none" stroke="#D83B01" stroke-width="1.200"/><rect x="4.200" y="16.200" width="8.600" height="8.600" fill="none" stroke="#D83B01" stroke-width="1.200"/><rect x="16.200" y="16.200" width="8.600" height="8.600" fill="none" stroke="#D83B01" stroke-width="1.200"/></svg>
<div class="t" style="left:1465.00px;top:121px;font-size:12.3px;line-height:15px;color:#242424;transform:scaleX(1.0071);">Add-ins</div>
<svg class="b" style="left:1532px;top:86px;" width="32" height="30" viewBox="0 0 32 30"><defs>
<linearGradient id="cpa" x1="0" y1="0" x2="0" y2="1"><stop offset="0" stop-color="#2A7BE4"/><stop offset="0.450" stop-color="#36C3B0"/><stop offset="0.750" stop-color="#F5D03A"/><stop offset="1" stop-color="#F58A2A"/></linearGradient>
<linearGradient id="cpb" x1="0" y1="0" x2="0" y2="1"><stop offset="0" stop-color="#3B6AE8"/><stop offset="0.500" stop-color="#B66BEA"/><stop offset="1" stop-color="#F0524A"/></linearGradient></defs>
<path d="M9.500 2.500C11 1.500 13 1.200 15 1.200H19C21 1.200 22.400 2.400 23 4.200L24 7.500L18.500 9.500L15.500 6.500L12.500 16.500L10.500 22.500H6C2.500 22.500 0.500 20 1.500 16.500L4.500 7C5.500 4.500 7.500 3.200 9.500 2.500Z" fill="url(#cpa)"/>
<path d="M22.500 27.500C21 28.500 19 28.800 17 28.800H13C11 28.800 9.600 27.600 9 25.800L8 22.500L13.500 20.500L16.500 23.500L19.500 13.500L21.500 7.500H26C29.500 7.500 31.500 10 30.500 13.500L27.500 23C26.500 25.500 24.500 26.800 22.500 27.500Z" fill="url(#cpb)"/>
<path d="M14.500 8.500L17.500 8.500L20.200 9.200L17.500 21.500L14.500 21.500L11.800 20.800Z" fill="#fff"/></svg>
<div class="t" style="left:1528.00px;top:121px;font-size:12.3px;line-height:15px;color:#242424;transform:scaleX(1.0186);">Copilot</div>
<svg class="b" style="left:1612.5px;top:88px;" width="30" height="30" viewBox="0 0 30 30"><path d="M5.500 1H14.500L19 5.500V11M5.500 1A2 2 0 0 0 3.500 3V19.500A2 2 0 0 0 5.500 21.500H10" fill="none" stroke="#3C6FE0" stroke-width="1.200"/><path d="M8.500 14.500C10.500 12 11.800 8.500 11.400 6.500C11.200 5.600 10.200 5.800 10.300 6.800C10.600 9.600 13 12 15.400 12.600C16.400 12.800 16.500 11.800 15.500 11.700C13 11.500 10 13 8.500 14.500Z" fill="none" stroke="#3C6FE0" stroke-width="0.900"/><g transform="rotate(-45 20 21)" fill="none" stroke="#3C6FE0" stroke-width="1.300"><rect x="12.500" y="18.200" width="8.600" height="5.600" rx="2.800"/><rect x="18.900" y="18.200" width="8.600" height="5.600" rx="2.800"/></g></svg>
<div class="t" style="left:1596.00px;top:121px;font-size:12.3px;line-height:15px;color:#242424;transform:scaleX(0.8932);">Create PDF</div>
<div class="t" style="left:1588.00px;top:137px;font-size:12.3px;line-height:15px;color:#242424;transform:scaleX(0.9411);">and Share link</div>
<svg class="b" style="left:1703.5px;top:88px;" width="30" height="30" viewBox="0 0 30 30"><path d="M5.500 1H14.500L19 5.500V11M5.500 1A2 2 0 0 0 3.500 3V19.500A2 2 0 0 0 5.500 21.500H10" fill="none" stroke="#3C6FE0" stroke-width="1.200"/><path d="M8.500 14.500C10.500 12 11.800 8.500 11.400 6.500C11.200 5.600 10.200 5.800 10.300 6.800C10.600 9.600 13 12 15.400 12.600C16.400 12.800 16.500 11.800 15.500 11.700C13 11.500 10 13 8.500 14.500Z" fill="none" stroke="#3C6FE0" stroke-width="0.900"/><rect x="14.500" y="17.500" width="13.500" height="10" rx="1" fill="#fff" stroke="#3C6FE0" stroke-width="1.200"/><path d="M14.800 18.200L21.250 23.500L27.700 18.200" fill="none" stroke="#3C6FE0" stroke-width="1.100"/></svg>
<div class="t" style="left:1675.00px;top:121px;font-size:12.3px;line-height:15px;color:#242424;transform:scaleX(0.9058);">Create PDF and</div>
<div class="t" style="left:1669.00px;top:137px;font-size:12.3px;line-height:15px;color:#242424;transform:scaleX(0.9512);">Share via Outlook</div>
<svg class="b" style="left:1805px;top:85px;" width="32" height="32" viewBox="0 0 32 32"><circle cx="16" cy="16" r="16" fill="#2CA01C"/>
<path d="M12.500 10.500H10.500A5.500 5.500 0 0 0 10.500 21.500H12.500" fill="none" stroke="#fff" stroke-width="2.300"/><path d="M13.600 8.500V25.500" stroke="#fff" stroke-width="2.300"/>
<path d="M19.500 21.500H21.500A5.500 5.500 0 0 0 21.500 10.500H19.500" fill="none" stroke="#fff" stroke-width="2.300"/><path d="M18.400 6.500V23.500" stroke="#fff" stroke-width="2.300"/></svg>
<div class="t" style="left:1789.00px;top:121px;font-size:12.3px;line-height:15px;color:#242424;transform:scaleX(0.9175);">Spreadsheet</div>
<div class="t" style="left:1809.00px;top:137px;font-size:12.3px;line-height:15px;color:#242424;transform:scaleX(0.8777);">Sync</div>
<div class="t" style="left:1776.00px;top:161px;font-size:12.3px;line-height:15px;color:#242424;transform:scaleX(0.8954);">Spreadsheet Sync</div>
<svg class="b" style="left:19px;top:185px;" width="17" height="17" viewBox="0 0 17 17"><circle cx="8.500" cy="8.500" r="7.300" fill="none" stroke="#1E78C8" stroke-width="1.200"/><path d="M8.500 7.400V12.400" stroke="#1E78C8" stroke-width="1.500"/><circle cx="8.500" cy="5" r="0.950" fill="#1E78C8"/></svg>
<div class="t" style="left:44.00px;top:186px;font-size:12.6px;line-height:16px;color:#242424;transform:scaleX(0.8846);">SLOW WORKBOOK?</div>
<div class="t" style="left:162.80px;top:186px;font-size:12.6px;line-height:16px;color:#242424;transform:scaleX(0.9569);">97% of your workbook has unused formatting and metadata that can be optimized to improve performance.</div>
<div class="b" style="left:744px;top:181px;width:124px;height:25px;background:#fff;border:1px solid #8A8A8A;border-radius:4px;box-sizing:border-box;"></div>
<div class="t" style="left:753.40px;top:186px;font-size:12.6px;line-height:16px;color:#242424;transform:scaleX(0.9322);">Check Performance</div>
<svg class="b" style="left:1890.5px;top:187.5px;" width="11" height="11" viewBox="0 0 11 11"><path d="M1 1L10 10M10 1L1 10" stroke="#222" stroke-width="1.100"/></svg>
<!-- fbar -->
<div class="b" style="left:8px;top:216.4px;width:102px;height:25.5px;background:#fff;border:1px solid #D4D4D4;border-radius:4px;box-sizing:border-box;"></div>
<div class="t" style="left:15.00px;top:221px;font-size:13.2px;line-height:17px;color:#242424;transform:scaleX(0.9209);">D80</div>
<svg class="b" style="left:92.9px;top:226.29999999999998px;" width="11" height="6.6" viewBox="0 0 11 6.6"><path d="M1 1L5.5 5.6L10 1" fill="none" stroke="#333" stroke-width="1.25" stroke-linecap="round" stroke-linejoin="round"/></svg>
<div class="b" style="left:119px;top:223.8px;width:2px;height:2px;background:#333;border-radius:1px;"></div>
<div class="b" style="left:119px;top:227.7px;width:2px;height:2px;background:#333;border-radius:1px;"></div>
<div class="b" style="left:119px;top:231.5px;width:2px;height:2px;background:#333;border-radius:1px;"></div>
<div class="b" style="left:130px;top:216.4px;width:86px;height:25.5px;background:#fff;border:1px solid #D4D4D4;border-radius:4px;box-sizing:border-box;"></div>
<svg class="b" style="left:136px;top:223px;" width="14" height="13" viewBox="0 0 14 13"><path d="M1.5 1L12 12M12 1L1.5 12" stroke="#B8B8B8" stroke-width="1.2"/></svg>
<svg class="b" style="left:158px;top:223px;" width="18" height="13" viewBox="0 0 18 13"><path d="M1.2 7L6 11.8L16.4 1.2" fill="none" stroke="#B8B8B8" stroke-width="1.2"/></svg>
<div class="t" style="left:183.60px;top:218px;font-size:18px;line-height:23px;color:#333;font-style:italic;font-family:'Liberation Serif',serif;-webkit-text-stroke:0.35px #333;">f</div>
<div class="t" style="left:191.00px;top:222px;font-size:13.5px;line-height:17px;color:#333;font-style:italic;font-family:'Liberation Serif',serif;-webkit-text-stroke:0.35px #333;">x</div>
<svg class="b" style="left:204.4px;top:226.79999999999998px;" width="8.4" height="5.6" viewBox="0 0 8.4 5.6"><path d="M1 1L4.2 4.6L7.4 1" fill="none" stroke="#777" stroke-width="1.1" stroke-linecap="round" stroke-linejoin="round"/></svg>
<div class="b" style="left:220px;top:216.4px;width:1692px;height:25.5px;background:#fff;border:1px solid #D4D4D4;border-radius:4px;box-sizing:border-box;"></div>
<div class="t" style="left:230.50px;top:221px;font-size:13.2px;line-height:17px;color:#242424;transform:scaleX(1.0905);">Julia Kiili</div>
<svg class="b" style="left:1897.1000000000001px;top:224.29999999999998px;" width="10.6" height="6.6" viewBox="0 0 10.6 6.6"><path d="M1 1L5.3 5.6L9.6 1" fill="none" stroke="#333" stroke-width="1.2" stroke-linecap="round" stroke-linejoin="round"/></svg>
<!-- grid -->
<div class="b" style="left:26px;top:269px;width:1872px;height:709px;background:#fff;"></div>
<div class="t" style="left:97.71px;top:250px;font-size:13.2px;line-height:17px;color:#444;transform:scaleX(0.8600);">A</div>
<div class="b" style="left:176px;top:250px;width:1px;height:18px;background:#D9D9D9;"></div>
<div class="t" style="left:248.71px;top:250px;font-size:13.2px;line-height:17px;color:#444;transform:scaleX(0.8600);">B</div>
<div class="b" style="left:327px;top:250px;width:1px;height:18px;background:#D9D9D9;"></div>
<div class="t" style="left:415.90px;top:250px;font-size:13.2px;line-height:17px;color:#444;transform:scaleX(0.8600);">C</div>
<div class="b" style="left:511px;top:250px;width:1px;height:18px;background:#D9D9D9;"></div>
<div class="b" style="left:511px;top:249px;width:595px;height:19px;background:#E1E1E1;"></div>
<div class="t" style="left:804.90px;top:250px;font-size:13.2px;line-height:17px;color:#0E6B36;transform:scaleX(0.8600);">D</div>
<div class="b" style="left:1105px;top:250px;width:1px;height:18px;background:#D9D9D9;"></div>
<div class="t" style="left:1271.71px;top:250px;font-size:13.2px;line-height:17px;color:#444;transform:scaleX(0.8600);">E</div>
<div class="b" style="left:1444px;top:250px;width:1px;height:18px;background:#D9D9D9;"></div>
<div class="t" style="left:1473.53px;top:250px;font-size:13.2px;line-height:17px;color:#444;transform:scaleX(0.8600);">F</div>
<div class="b" style="left:1508px;top:250px;width:1px;height:18px;background:#D9D9D9;"></div>
<div class="t" style="left:1536.59px;top:250px;font-size:13.2px;line-height:17px;color:#444;transform:scaleX(0.8600);">G</div>
<div class="b" style="left:1572px;top:250px;width:1px;height:18px;background:#D9D9D9;"></div>
<div class="t" style="left:1600.90px;top:250px;font-size:13.2px;line-height:17px;color:#444;transform:scaleX(0.8600);">H</div>
<div class="b" style="left:1636px;top:250px;width:1px;height:18px;background:#D9D9D9;"></div>
<div class="t" style="left:1667.42px;top:250px;font-size:13.2px;line-height:17px;color:#444;transform:scaleX(0.8600);">I</div>
<div class="b" style="left:1700px;top:250px;width:1px;height:18px;background:#D9D9D9;"></div>
<div class="t" style="left:1730.16px;top:250px;font-size:13.2px;line-height:17px;color:#444;transform:scaleX(0.8600);">J</div>
<div class="b" style="left:1764px;top:250px;width:1px;height:18px;background:#D9D9D9;"></div>
<div class="t" style="left:1793.21px;top:250px;font-size:13.2px;line-height:17px;color:#444;transform:scaleX(0.8600);">K</div>
<div class="b" style="left:1828px;top:250px;width:1px;height:18px;background:#D9D9D9;"></div>
<div class="t" style="left:1857.84px;top:250px;font-size:13.2px;line-height:17px;color:#444;transform:scaleX(0.8600);">L</div>
<div class="b" style="left:1892px;top:250px;width:1px;height:18px;background:#D9D9D9;"></div>
<div class="b" style="left:25px;top:250px;width:1px;height:18px;background:#D9D9D9;"></div>
<svg class="b" style="left:10px;top:253px;" width="12" height="12" viewBox="0 0 12 12"><path d="M12 0V12H0Z" fill="#DDDDDD"/></svg>
<div class="b" style="left:25px;top:268px;width:1874px;height:1px;background:#9B9B9B;"></div>
<div class="b" style="left:511px;top:267px;width:595px;height:2px;background:#1A7343;"></div>
<div class="b" style="left:25px;top:268px;width:1px;height:710px;background:#9B9B9B;"></div>
<div class="b" style="left:1898px;top:268px;width:1px;height:710px;background:#C6C6C6;"></div>
<div class="t" style="left:9.09px;top:272px;font-size:13.2px;line-height:17px;color:#444;transform:scaleX(0.9300);">1</div>
<div class="b" style="left:0px;top:289px;width:25px;height:1px;background:linear-gradient(90deg,#F0F0F0,#DADADA);"></div>
<div class="t" style="left:9.09px;top:293px;font-size:13.2px;line-height:17px;color:#444;transform:scaleX(0.9300);">2</div>
<div class="b" style="left:0px;top:310px;width:25px;height:1px;background:linear-gradient(90deg,#F0F0F0,#DADADA);"></div>
<div class="t" style="left:9.09px;top:313px;font-size:13.2px;line-height:17px;color:#444;transform:scaleX(0.9300);">3</div>
<div class="b" style="left:0px;top:330px;width:25px;height:1px;background:linear-gradient(90deg,#F0F0F0,#DADADA);"></div>
<div class="t" style="left:9.09px;top:333px;font-size:13.2px;line-height:17px;color:#444;transform:scaleX(0.9300);">4</div>
<div class="b" style="left:0px;top:350px;width:25px;height:1px;background:linear-gradient(90deg,#F0F0F0,#DADADA);"></div>
<div class="t" style="left:9.09px;top:353px;font-size:13.2px;line-height:17px;color:#444;transform:scaleX(0.9300);">5</div>
<div class="t" style="left:28.50px;top:271px;font-size:14.5px;line-height:18px;color:#000;font-weight:bold;transform:scaleX(0.9352);">CompOne Administrators</div>
<div class="t" style="left:37.50px;top:292px;font-size:14.5px;line-height:18px;color:#000;font-style:italic;transform:scaleX(0.9818);">Payroll Reminders</div>
<div class="t" style="left:64.70px;top:313px;font-size:13.8px;line-height:17px;color:#000;font-weight:bold;transform:scaleX(0.9385);">Company Code:</div>
<div class="t" style="left:179.70px;top:313px;font-size:13.8px;line-height:17px;color:#000;font-weight:bold;transform:scaleX(0.8554);">U4F</div>
<div class="b" style="left:26px;top:350px;width:1419px;height:21px;background:#000;"></div>
<div class="t" style="left:80.00px;top:353px;font-size:14.5px;line-height:18px;color:#fff;font-weight:bold;transform:scaleX(0.9478);">Status</div>
<div class="t" style="left:214.00px;top:353px;font-size:14.5px;line-height:18px;color:#fff;font-weight:bold;transform:scaleX(0.9623);">Check Date</div>
<div class="t" style="left:330.40px;top:353px;font-size:14.5px;line-height:18px;color:#fff;font-weight:bold;transform:scaleX(0.9285);">Employee</div>
<div class="t" style="left:514.00px;top:353px;font-size:14.5px;line-height:18px;color:#fff;font-weight:bold;transform:scaleX(0.9653);">Comments/ Notes</div>
<div class="t" style="left:1108.00px;top:353px;font-size:14.5px;line-height:18px;color:#fff;font-weight:bold;transform:scaleX(0.9306);">Screenshots</div>
<svg class="b" style="left:159px;top:353px;" width="17" height="17" viewBox="0 0 17 17"><defs><linearGradient id="fb" x1="0" y1="0" x2="0" y2="1"><stop offset="0" stop-color="#FFFFFF"/><stop offset="1" stop-color="#E4E4E4"/></linearGradient></defs><rect x="0.5" y="0.5" width="16" height="16" fill="url(#fb)" stroke="#9A9A9A"/><path d="M5 7H12L8.5 11Z" fill="#5C5C5C"/></svg>
<svg class="b" style="left:310px;top:353px;" width="17" height="17" viewBox="0 0 17 17"><defs><linearGradient id="fb" x1="0" y1="0" x2="0" y2="1"><stop offset="0" stop-color="#FFFFFF"/><stop offset="1" stop-color="#E4E4E4"/></linearGradient></defs><rect x="0.5" y="0.5" width="16" height="16" fill="url(#fb)" stroke="#9A9A9A"/><path d="M4.5 12.5V5M2.8 6.8L4.5 4.6L6.2 6.8" stroke="#444" fill="none" stroke-width="1"/><path d="M7 4H15L12 7.6V12.5H10V7.6Z" fill="#444"/></svg>
<svg class="b" style="left:494px;top:353px;" width="17" height="17" viewBox="0 0 17 17"><defs><linearGradient id="fb" x1="0" y1="0" x2="0" y2="1"><stop offset="0" stop-color="#FFFFFF"/><stop offset="1" stop-color="#E4E4E4"/></linearGradient></defs><rect x="0.5" y="0.5" width="16" height="16" fill="url(#fb)" stroke="#9A9A9A"/><path d="M5 7H12L8.5 11Z" fill="#5C5C5C"/></svg>
<svg class="b" style="left:1088px;top:353px;" width="17" height="17" viewBox="0 0 17 17"><defs><linearGradient id="fb" x1="0" y1="0" x2="0" y2="1"><stop offset="0" stop-color="#FFFFFF"/><stop offset="1" stop-color="#E4E4E4"/></linearGradient></defs><rect x="0.5" y="0.5" width="16" height="16" fill="url(#fb)" stroke="#9A9A9A"/><path d="M5 7H12L8.5 11Z" fill="#5C5C5C"/></svg>
<svg class="b" style="left:1427px;top:353px;" width="17" height="17" viewBox="0 0 17 17"><defs><linearGradient id="fb" x1="0" y1="0" x2="0" y2="1"><stop offset="0" stop-color="#FFFFFF"/><stop offset="1" stop-color="#E4E4E4"/></linearGradient></defs><rect x="0.5" y="0.5" width="16" height="16" fill="url(#fb)" stroke="#9A9A9A"/><path d="M5 7H12L8.5 11Z" fill="#5C5C5C"/></svg>
<div class="b" style="left:0px;top:371px;width:1898px;height:1px;background:#9B9B9B;"></div>
<div class="b" style="left:26px;top:372px;width:150px;height:19px;background:#DAF2D0;"></div>
<div class="b" style="left:177px;top:372px;width:150px;height:19px;background:#DAF2D0;"></div>
<div class="b" style="left:328px;top:372px;width:183px;height:19px;background:#DAF2D0;"></div>
<div class="b" style="left:512px;top:372px;width:593px;height:19px;background:#DAF2D0;"></div>
<div class="b" style="left:1106px;top:372px;width:338px;height:19px;background:#F2F2F2;"></div>
<div class="t" style="left:6.07px;top:374px;font-size:13.2px;line-height:17px;color:#1A1AFF;transform:scaleX(0.9300);">75</div>
<div class="b" style="left:0px;top:391px;width:25px;height:1px;background:linear-gradient(90deg,#F0F0F0,#D6D6D6);"></div>
<div class="t" style="left:71.80px;top:373px;font-size:14.0px;line-height:18px;color:#275317;transform:scaleX(0.9747);">Complete</div>
<div class="t" style="left:225.95px;top:373px;font-size:14.0px;line-height:18px;color:#275317;transform:scaleX(0.9450);">03/13/26</div>
<div class="t" style="left:330.40px;top:373px;font-size:14.0px;line-height:18px;color:#275317;transform:scaleX(0.9662);">Elizabeth Kloha</div>
<div class="t" style="left:514.40px;top:373px;font-size:14.0px;line-height:18px;color:#275317;transform:scaleX(0.9600);">Make sure FSA deductions start</div>
<div class="b" style="left:26px;top:392px;width:150px;height:39px;background:#DAF2D0;"></div>
<div class="b" style="left:177px;top:392px;width:150px;height:39px;background:#DAF2D0;"></div>
<div class="b" style="left:328px;top:392px;width:183px;height:39px;background:#DAF2D0;"></div>
<div class="b" style="left:512px;top:392px;width:593px;height:39px;background:#DAF2D0;"></div>
<div class="b" style="left:1106px;top:392px;width:338px;height:39px;background:#F2F2F2;"></div>
<div class="t" style="left:6.07px;top:414px;font-size:13.2px;line-height:17px;color:#1A1AFF;transform:scaleX(0.9300);">76</div>
<div class="b" style="left:0px;top:431px;width:25px;height:1px;background:linear-gradient(90deg,#F0F0F0,#D6D6D6);"></div>
<div class="t" style="left:71.80px;top:403px;font-size:14.0px;line-height:18px;color:#275317;transform:scaleX(0.9747);">Complete</div>
<div class="t" style="left:225.95px;top:403px;font-size:14.0px;line-height:18px;color:#275317;transform:scaleX(0.9450);">03/13/26</div>
<div class="t" style="left:330.40px;top:403px;font-size:14.0px;line-height:18px;color:#275317;transform:scaleX(0.9522);">Linda Roberts</div>
<div class="t" style="left:514.40px;top:393px;font-size:14.0px;line-height:18px;color:#275317;transform:scaleX(0.9512);">LDW: 3/5/26. Pay 72 regular hours. Payout 40 hours of PTO. Refund benfits for 2 pay periods</div>
<div class="t" style="left:514.40px;top:413px;font-size:14.0px;line-height:18px;color:#275317;transform:scaleX(0.9768);">(Medical and Dental) totaling $62.76.</div>
<div class="b" style="left:26px;top:432px;width:150px;height:39px;background:#DAF2D0;"></div>
<div class="b" style="left:177px;top:432px;width:150px;height:39px;background:#DAF2D0;"></div>
<div class="b" style="left:328px;top:432px;width:183px;height:39px;background:#DAF2D0;"></div>
<div class="b" style="left:512px;top:432px;width:593px;height:39px;background:#DAF2D0;"></div>
<div class="b" style="left:1106px;top:432px;width:338px;height:39px;background:#F2F2F2;"></div>
<div class="t" style="left:6.07px;top:454px;font-size:13.2px;line-height:17px;color:#1A1AFF;transform:scaleX(0.9300);">77</div>
<div class="b" style="left:0px;top:471px;width:25px;height:1px;background:linear-gradient(90deg,#F0F0F0,#D6D6D6);"></div>
<div class="t" style="left:71.80px;top:443px;font-size:14.0px;line-height:18px;color:#275317;transform:scaleX(0.9747);">Complete</div>
<div class="t" style="left:225.95px;top:443px;font-size:14.0px;line-height:18px;color:#275317;transform:scaleX(0.9450);">03/13/26</div>
<div class="t" style="left:330.40px;top:443px;font-size:14.0px;line-height:18px;color:#275317;">Dru Hamilton</div>
<div class="t" style="left:514.40px;top:433px;font-size:14.0px;line-height:18px;color:#275317;transform:scaleX(0.9790);">Make sure Dru Hamilton shows up on payroll, she is on LOA in system so not sure if she will pull</div>
<div class="t" style="left:514.40px;top:453px;font-size:14.0px;line-height:18px;color:#275317;transform:scaleX(0.9898);">through</div>
<div class="b" style="left:26px;top:472px;width:150px;height:19px;background:#DAF2D0;"></div>
<div class="b" style="left:177px;top:472px;width:150px;height:19px;background:#DAF2D0;"></div>
<div class="b" style="left:328px;top:472px;width:183px;height:19px;background:#DAF2D0;"></div>
<div class="b" style="left:512px;top:472px;width:593px;height:19px;background:#DAF2D0;"></div>
<div class="b" style="left:1106px;top:472px;width:338px;height:19px;background:#F2F2F2;"></div>
<div class="t" style="left:6.07px;top:474px;font-size:13.2px;line-height:17px;color:#1A1AFF;transform:scaleX(0.9300);">78</div>
<div class="b" style="left:0px;top:491px;width:25px;height:1px;background:linear-gradient(90deg,#F0F0F0,#D6D6D6);"></div>
<div class="t" style="left:71.80px;top:473px;font-size:14.0px;line-height:18px;color:#275317;transform:scaleX(0.9747);">Complete</div>
<div class="t" style="left:225.95px;top:473px;font-size:14.0px;line-height:18px;color:#275317;transform:scaleX(0.9450);">03/13/26</div>
<div class="t" style="left:330.40px;top:473px;font-size:14.0px;line-height:18px;color:#275317;transform:scaleX(0.9942);">Lucinda Taylor</div>
<div class="t" style="left:514.40px;top:473px;font-size:14.0px;line-height:18px;color:#275317;transform:scaleX(0.9752);">May need to adjust timecard, potential LOA, pending</div>
<div class="b" style="left:26px;top:492px;width:150px;height:39px;background:#DAF2D0;"></div>
<div class="b" style="left:177px;top:492px;width:150px;height:39px;background:#DAF2D0;"></div>
<div class="b" style="left:328px;top:492px;width:183px;height:39px;background:#DAF2D0;"></div>
<div class="b" style="left:512px;top:492px;width:593px;height:39px;background:#DAF2D0;"></div>
<div class="b" style="left:1106px;top:492px;width:338px;height:39px;background:#F2F2F2;"></div>
<div class="t" style="left:6.07px;top:514px;font-size:13.2px;line-height:17px;color:#1A1AFF;transform:scaleX(0.9300);">79</div>
<div class="b" style="left:0px;top:531px;width:25px;height:1px;background:linear-gradient(90deg,#F0F0F0,#D6D6D6);"></div>
<div class="t" style="left:71.80px;top:503px;font-size:14.0px;line-height:18px;color:#275317;transform:scaleX(0.9747);">Complete</div>
<div class="t" style="left:225.95px;top:503px;font-size:14.0px;line-height:18px;color:#275317;transform:scaleX(0.9450);">03/27/26</div>
<div class="t" style="left:330.40px;top:503px;font-size:14.0px;line-height:18px;color:#275317;transform:scaleX(0.9802);">Autumn Moore</div>
<div class="t" style="left:514.40px;top:493px;font-size:14.0px;line-height:18px;color:#275317;transform:scaleX(0.9694);">Terminated 3/13/26. Jess already processed final payment on 3/13/26. Make sure she doesn't get</div>
<div class="t" style="left:514.40px;top:513px;font-size:14.0px;line-height:18px;color:#275317;transform:scaleX(0.9929);">paid anything this pay.</div>
<div class="b" style="left:26px;top:532px;width:150px;height:39px;background:#FFFF00;"></div>
<div class="b" style="left:177px;top:532px;width:150px;height:39px;background:#FFFF00;"></div>
<div class="b" style="left:328px;top:532px;width:183px;height:39px;background:#FFFF00;"></div>
<div class="b" style="left:512px;top:532px;width:593px;height:39px;background:#FFFF00;"></div>
<div class="b" style="left:1106px;top:532px;width:338px;height:39px;background:#F2F2F2;"></div>
<div class="t" style="left:6.07px;top:554px;font-size:13.2px;line-height:17px;color:#1A1AFF;transform:scaleX(0.9300);">80</div>
<div class="b" style="left:0px;top:571px;width:25px;height:1px;background:linear-gradient(90deg,#F0F0F0,#D6D6D6);"></div>
<div class="t" style="left:225.95px;top:543px;font-size:14.0px;line-height:18px;color:#000;transform:scaleX(0.9450);">03/27/26</div>
<div class="t" style="left:330.40px;top:543px;font-size:14.0px;line-height:18px;color:#000;transform:scaleX(1.0191);">Julia Kiili</div>
<div class="t" style="left:514.40px;top:533px;font-size:14.0px;line-height:18px;color:#000;transform:scaleX(0.9660);">Make sure pay increase is effective 3/8/26, bi-weekly salary for this check should be $2961.54.</div>
<div class="t" style="left:514.40px;top:553px;font-size:14.0px;line-height:18px;color:#000;">Julia will be eligible for implementation bonuses in the future.</div>
<div class="b" style="left:26px;top:572px;width:150px;height:39px;background:#FFFF00;"></div>
<div class="b" style="left:177px;top:572px;width:150px;height:39px;background:#FFFF00;"></div>
<div class="b" style="left:328px;top:572px;width:183px;height:39px;background:#FFFF00;"></div>
<div class="b" style="left:512px;top:572px;width:593px;height:39px;background:#FFFF00;"></div>
<div class="b" style="left:1106px;top:572px;width:338px;height:39px;background:#F2F2F2;"></div>
<div class="t" style="left:6.07px;top:594px;font-size:13.2px;line-height:17px;color:#1A1AFF;transform:scaleX(0.9300);">81</div>
<div class="b" style="left:0px;top:611px;width:25px;height:1px;background:linear-gradient(90deg,#F0F0F0,#D6D6D6);"></div>
<div class="t" style="left:225.95px;top:583px;font-size:14.0px;line-height:18px;color:#000;transform:scaleX(0.9450);">03/27/26</div>
<div class="t" style="left:330.40px;top:583px;font-size:14.0px;line-height:18px;color:#000;">Dru Hamilton</div>
<div class="t" style="left:514.40px;top:583px;font-size:14.0px;line-height:18px;color:#000;transform:scaleX(0.9599);">Dru Hamilton on LOA as of 3/9/26. So for this pay only pay 40 hours of PTO. Keep all deductions.</div>
<div class="b" style="left:26px;top:612px;width:150px;height:39px;background:#FFFF00;"></div>
<div class="b" style="left:177px;top:612px;width:150px;height:39px;background:#FFFF00;"></div>
<div class="b" style="left:328px;top:612px;width:183px;height:39px;background:#FFFF00;"></div>
<div class="b" style="left:512px;top:612px;width:593px;height:39px;background:#FFFF00;"></div>
<div class="b" style="left:1106px;top:612px;width:338px;height:39px;background:#F2F2F2;"></div>
<div class="t" style="left:6.07px;top:634px;font-size:13.2px;line-height:17px;color:#1A1AFF;transform:scaleX(0.9300);">82</div>
<div class="b" style="left:0px;top:651px;width:25px;height:1px;background:linear-gradient(90deg,#F0F0F0,#D6D6D6);"></div>
<div class="t" style="left:225.95px;top:623px;font-size:14.0px;line-height:18px;color:#000;transform:scaleX(0.9450);">03/27/26</div>
<div class="t" style="left:330.40px;top:623px;font-size:14.0px;line-height:18px;color:#000;transform:scaleX(1.0101);">Telly Miller</div>
<div class="t" style="left:514.40px;top:613px;font-size:14.0px;line-height:18px;color:#000;transform:scaleX(0.9679);">Telly Miller on LOA as of 3/17/26. Only pay for hours on timecard (should be 48.42 hours). Keep</div>
<div class="t" style="left:514.40px;top:633px;font-size:14.0px;line-height:18px;color:#000;transform:scaleX(1.0100);">all deductions.</div>
<div class="b" style="left:26px;top:652px;width:150px;height:19px;background:#DAF2D0;"></div>
<div class="b" style="left:177px;top:652px;width:150px;height:19px;background:#DAF2D0;"></div>
<div class="b" style="left:328px;top:652px;width:183px;height:19px;background:#DAF2D0;"></div>
<div class="b" style="left:512px;top:652px;width:593px;height:19px;background:#DAF2D0;"></div>
<div class="b" style="left:1106px;top:652px;width:338px;height:19px;background:#F2F2F2;"></div>
<div class="t" style="left:6.07px;top:654px;font-size:13.2px;line-height:17px;color:#1A1AFF;transform:scaleX(0.9300);">83</div>
<div class="b" style="left:0px;top:671px;width:25px;height:1px;background:linear-gradient(90deg,#F0F0F0,#D6D6D6);"></div>
<div class="t" style="left:71.80px;top:653px;font-size:14.0px;line-height:18px;color:#275317;transform:scaleX(0.9747);">Complete</div>
<div class="b" style="left:26px;top:672px;width:150px;height:19px;background:#FFFF00;"></div>
<div class="b" style="left:177px;top:672px;width:150px;height:19px;background:#FFFF00;"></div>
<div class="b" style="left:328px;top:672px;width:183px;height:19px;background:#FFFF00;"></div>
<div class="b" style="left:512px;top:672px;width:593px;height:19px;background:#FFFF00;"></div>
<div class="b" style="left:1106px;top:672px;width:338px;height:19px;background:#F2F2F2;"></div>
<div class="t" style="left:6.07px;top:674px;font-size:13.2px;line-height:17px;color:#1A1AFF;transform:scaleX(0.9300);">84</div>
<div class="b" style="left:0px;top:691px;width:25px;height:1px;background:linear-gradient(90deg,#F0F0F0,#D6D6D6);"></div>
<div class="t" style="left:225.95px;top:673px;font-size:14.0px;line-height:18px;color:#000;transform:scaleX(0.9450);">03/27/26</div>
<div class="t" style="left:330.40px;top:673px;font-size:14.0px;line-height:18px;color:#000;transform:scaleX(0.9945);">Kaitlin Bradley</div>
<div class="t" style="left:514.40px;top:673px;font-size:14.0px;line-height:18px;color:#000;transform:scaleX(0.9432);">Pay increase effective 3/8/26, make sure pay = $2,000</div>
<div class="b" style="left:26px;top:692px;width:150px;height:19px;background:#FFFF00;"></div>
<div class="b" style="left:177px;top:692px;width:150px;height:19px;background:#FFFF00;"></div>
<div class="b" style="left:328px;top:692px;width:183px;height:19px;background:#FFFF00;"></div>
<div class="b" style="left:512px;top:692px;width:593px;height:19px;background:#FFFF00;"></div>
<div class="b" style="left:1106px;top:692px;width:338px;height:19px;background:#F2F2F2;"></div>
<div class="t" style="left:6.07px;top:694px;font-size:13.2px;line-height:17px;color:#1A1AFF;transform:scaleX(0.9300);">85</div>
<div class="b" style="left:0px;top:711px;width:25px;height:1px;background:linear-gradient(90deg,#F0F0F0,#D6D6D6);"></div>
<div class="t" style="left:225.95px;top:693px;font-size:14.0px;line-height:18px;color:#000;transform:scaleX(0.9450);">03/27/26</div>
<div class="t" style="left:330.40px;top:693px;font-size:14.0px;line-height:18px;color:#000;transform:scaleX(0.9522);">Linda Roberts</div>
<div class="t" style="left:514.40px;top:693px;font-size:14.0px;line-height:18px;color:#000;transform:scaleX(0.9778);">Pay separation compensation $1,225.70. This will be final check.</div>
<div class="b" style="left:26px;top:712px;width:150px;height:19px;background:#DAF2D0;"></div>
<div class="b" style="left:177px;top:712px;width:150px;height:19px;background:#DAF2D0;"></div>
<div class="b" style="left:328px;top:712px;width:183px;height:19px;background:#DAF2D0;"></div>
<div class="b" style="left:512px;top:712px;width:593px;height:19px;background:#DAF2D0;"></div>
<div class="b" style="left:1106px;top:712px;width:338px;height:19px;background:#F2F2F2;"></div>
<div class="t" style="left:6.07px;top:714px;font-size:13.2px;line-height:17px;color:#1A1AFF;transform:scaleX(0.9300);">86</div>
<div class="b" style="left:0px;top:731px;width:25px;height:1px;background:linear-gradient(90deg,#F0F0F0,#D6D6D6);"></div>
<div class="t" style="left:71.80px;top:713px;font-size:14.0px;line-height:18px;color:#275317;transform:scaleX(0.9747);">Complete</div>
<div class="t" style="left:225.95px;top:713px;font-size:14.0px;line-height:18px;color:#275317;transform:scaleX(0.9450);">03/27/26</div>
<div class="t" style="left:330.40px;top:713px;font-size:14.0px;line-height:18px;color:#275317;transform:scaleX(0.9764);">Bridget Hopkins</div>
<div class="t" style="left:514.40px;top:713px;font-size:14.0px;line-height:18px;color:#275317;transform:scaleX(0.9698);">New hire, DOH: 3/16, should have approxmiately 40 hours for first check.</div>
<div class="b" style="left:26px;top:732px;width:150px;height:19px;background:#F2F2F2;"></div>
<div class="b" style="left:177px;top:732px;width:150px;height:19px;background:#F2F2F2;"></div>
<div class="b" style="left:328px;top:732px;width:183px;height:19px;background:#F2F2F2;"></div>
<div class="b" style="left:512px;top:732px;width:593px;height:19px;background:#F2F2F2;"></div>
<div class="b" style="left:1106px;top:732px;width:338px;height:19px;background:#F2F2F2;"></div>
<div class="t" style="left:6.07px;top:734px;font-size:13.2px;line-height:17px;color:#1A1AFF;transform:scaleX(0.9300);">87</div>
<div class="b" style="left:0px;top:751px;width:25px;height:1px;background:linear-gradient(90deg,#F0F0F0,#D6D6D6);"></div>
<div class="t" style="left:225.95px;top:733px;font-size:14.0px;line-height:18px;color:#000;transform:scaleX(0.9450);">04/10/26</div>
<div class="t" style="left:330.40px;top:733px;font-size:14.0px;line-height:18px;color:#000;transform:scaleX(0.9802);">Autumn Moore</div>
<div class="t" style="left:514.40px;top:733px;font-size:14.0px;line-height:18px;color:#000;transform:scaleX(0.9563);">Check with EH to see if there is separation pay.</div>
<div class="b" style="left:26px;top:752px;width:150px;height:19px;background:#F2F2F2;"></div>
<div class="b" style="left:177px;top:752px;width:150px;height:19px;background:#F2F2F2;"></div>
<div class="b" style="left:328px;top:752px;width:183px;height:19px;background:#F2F2F2;"></div>
<div class="b" style="left:512px;top:752px;width:593px;height:19px;background:#F2F2F2;"></div>
<div class="b" style="left:1106px;top:752px;width:338px;height:19px;background:#F2F2F2;"></div>
<div class="t" style="left:6.07px;top:754px;font-size:13.2px;line-height:17px;color:#1A1AFF;transform:scaleX(0.9300);">88</div>
<div class="b" style="left:0px;top:771px;width:25px;height:1px;background:linear-gradient(90deg,#F0F0F0,#D6D6D6);"></div>
<div class="t" style="left:225.95px;top:753px;font-size:14.0px;line-height:18px;color:#000;transform:scaleX(0.9450);">05/22/26</div>
<div class="t" style="left:330.40px;top:753px;font-size:14.0px;line-height:18px;color:#000;transform:scaleX(0.9932);">Amanda Karagosian</div>
<div class="t" style="left:514.40px;top:753px;font-size:14.0px;line-height:18px;color:#000;transform:scaleX(0.9650);">Pay referral bonus of $2,000 (for referring Bazzetta and Morrisroe)</div>
<div class="b" style="left:26px;top:772px;width:150px;height:19px;background:#F2F2F2;"></div>
<div class="b" style="left:177px;top:772px;width:150px;height:19px;background:#F2F2F2;"></div>
<div class="b" style="left:328px;top:772px;width:183px;height:19px;background:#F2F2F2;"></div>
<div class="b" style="left:512px;top:772px;width:593px;height:19px;background:#F2F2F2;"></div>
<div class="b" style="left:1106px;top:772px;width:338px;height:19px;background:#F2F2F2;"></div>
<div class="t" style="left:6.07px;top:774px;font-size:13.2px;line-height:17px;color:#1A1AFF;transform:scaleX(0.9300);">89</div>
<div class="b" style="left:0px;top:791px;width:25px;height:1px;background:linear-gradient(90deg,#F0F0F0,#D6D6D6);"></div>
<div class="t" style="left:225.95px;top:773px;font-size:14.0px;line-height:18px;color:#000;transform:scaleX(0.9450);">06/05/26</div>
<div class="t" style="left:330.40px;top:773px;font-size:14.0px;line-height:18px;color:#000;transform:scaleX(0.9665);">Sarah Vinyard</div>
<div class="t" style="left:514.40px;top:773px;font-size:14.0px;line-height:18px;color:#000;transform:scaleX(0.9594);">Pay referral bonus of $1250 for referring Summer Propps</div>
<div class="b" style="left:26px;top:792px;width:150px;height:19px;background:#F2F2F2;"></div>
<div class="b" style="left:177px;top:792px;width:150px;height:19px;background:#F2F2F2;"></div>
<div class="b" style="left:328px;top:792px;width:183px;height:19px;background:#F2F2F2;"></div>
<div class="b" style="left:512px;top:792px;width:593px;height:19px;background:#F2F2F2;"></div>
<div class="b" style="left:1106px;top:792px;width:338px;height:19px;background:#F2F2F2;"></div>
<div class="t" style="left:6.07px;top:794px;font-size:13.2px;line-height:17px;color:#1A1AFF;transform:scaleX(0.9300);">90</div>
<div class="b" style="left:0px;top:811px;width:25px;height:1px;background:linear-gradient(90deg,#F0F0F0,#D6D6D6);"></div>
<div class="t" style="left:225.95px;top:793px;font-size:14.0px;line-height:18px;color:#000;transform:scaleX(0.9450);">06/18/26</div>
<div class="t" style="left:330.40px;top:793px;font-size:14.0px;line-height:18px;color:#000;transform:scaleX(0.9932);">Amanda Karagosian</div>
<div class="t" style="left:514.40px;top:793px;font-size:14.0px;line-height:18px;color:#000;transform:scaleX(0.9657);">Pay referral bonus of $1,250 (for referring Neal)</div>
<div class="b" style="left:26px;top:812px;width:150px;height:19px;background:#F2F2F2;"></div>
<div class="b" style="left:177px;top:812px;width:150px;height:19px;background:#F2F2F2;"></div>
<div class="b" style="left:328px;top:812px;width:183px;height:19px;background:#F2F2F2;"></div>
<div class="b" style="left:512px;top:812px;width:593px;height:19px;background:#F2F2F2;"></div>
<div class="b" style="left:1106px;top:812px;width:338px;height:19px;background:#F2F2F2;"></div>
<div class="t" style="left:6.07px;top:814px;font-size:13.2px;line-height:17px;color:#1A1AFF;transform:scaleX(0.9300);">91</div>
<div class="b" style="left:0px;top:831px;width:25px;height:1px;background:linear-gradient(90deg,#F0F0F0,#D6D6D6);"></div>
<div class="t" style="left:225.95px;top:813px;font-size:14.0px;line-height:18px;color:#000;transform:scaleX(0.9450);">06/18/26</div>
<div class="t" style="left:330.40px;top:813px;font-size:14.0px;line-height:18px;color:#000;transform:scaleX(0.9468);">Deanne Howe</div>
<div class="t" style="left:514.40px;top:813px;font-size:14.0px;line-height:18px;color:#000;transform:scaleX(0.9623);">Referral bonus in the amount of $1250 for referring Chelsea Withey</div>
<div class="b" style="left:26px;top:832px;width:150px;height:19px;background:#F2F2F2;"></div>
<div class="b" style="left:177px;top:832px;width:150px;height:19px;background:#F2F2F2;"></div>
<div class="b" style="left:328px;top:832px;width:183px;height:19px;background:#F2F2F2;"></div>
<div class="b" style="left:512px;top:832px;width:593px;height:19px;background:#F2F2F2;"></div>
<div class="b" style="left:1106px;top:832px;width:338px;height:19px;background:#F2F2F2;"></div>
<div class="t" style="left:6.07px;top:834px;font-size:13.2px;line-height:17px;color:#1A1AFF;transform:scaleX(0.9300);">92</div>
<div class="b" style="left:0px;top:851px;width:25px;height:1px;background:linear-gradient(90deg,#F0F0F0,#D6D6D6);"></div>
<div class="t" style="left:225.95px;top:833px;font-size:14.0px;line-height:18px;color:#000;transform:scaleX(0.9450);">06/19/26</div>
<div class="t" style="left:330.40px;top:833px;font-size:14.0px;line-height:18px;color:#000;transform:scaleX(0.9528);">Kathleen Mary Larsen</div>
<div class="t" style="left:514.40px;top:833px;font-size:14.0px;line-height:18px;color:#000;transform:scaleX(0.9731);">Pay referral bonus for referring Adria Larsen</div>
<div class="b" style="left:26px;top:852px;width:150px;height:19px;background:#F2F2F2;"></div>
<div class="b" style="left:177px;top:852px;width:150px;height:19px;background:#F2F2F2;"></div>
<div class="b" style="left:328px;top:852px;width:183px;height:19px;background:#F2F2F2;"></div>
<div class="b" style="left:512px;top:852px;width:593px;height:19px;background:#F2F2F2;"></div>
<div class="b" style="left:1106px;top:852px;width:338px;height:19px;background:#F2F2F2;"></div>
<div class="t" style="left:6.07px;top:854px;font-size:13.2px;line-height:17px;color:#444;transform:scaleX(0.9300);">93</div>
<div class="b" style="left:0px;top:871px;width:25px;height:1px;background:linear-gradient(90deg,#F0F0F0,#D6D6D6);"></div>
<div class="t" style="left:225.95px;top:853px;font-size:14.0px;line-height:18px;color:#000;transform:scaleX(0.9634);">09/11/26</div>
<div class="t" style="left:330.40px;top:853px;font-size:14.0px;line-height:18px;color:#000;transform:scaleX(0.9932);">Amanda Karagosian</div>
<div class="t" style="left:514.40px;top:853px;font-size:14.0px;line-height:18px;color:#000;transform:scaleX(0.9600);">Pay referral bonus of $1250 for referring B. Hopkins</div>
<div class="b" style="left:26px;top:872px;width:150px;height:19px;background:#F2F2F2;"></div>
<div class="b" style="left:177px;top:872px;width:150px;height:19px;background:#F2F2F2;"></div>
<div class="b" style="left:328px;top:872px;width:183px;height:19px;background:#F2F2F2;"></div>
<div class="b" style="left:512px;top:872px;width:593px;height:19px;background:#F2F2F2;"></div>
<div class="b" style="left:1106px;top:872px;width:338px;height:19px;background:#F2F2F2;"></div>
<div class="t" style="left:6.07px;top:874px;font-size:13.2px;line-height:17px;color:#444;transform:scaleX(0.9300);">94</div>
<div class="b" style="left:0px;top:891px;width:25px;height:1px;background:linear-gradient(90deg,#F0F0F0,#D6D6D6);"></div>
<div class="b" style="left:26px;top:892px;width:150px;height:19px;background:#F2F2F2;"></div>
<div class="b" style="left:177px;top:892px;width:150px;height:19px;background:#F2F2F2;"></div>
<div class="b" style="left:328px;top:892px;width:183px;height:19px;background:#F2F2F2;"></div>
<div class="b" style="left:512px;top:892px;width:593px;height:19px;background:#F2F2F2;"></div>
<div class="b" style="left:1106px;top:892px;width:338px;height:19px;background:#F2F2F2;"></div>
<div class="t" style="left:6.07px;top:894px;font-size:13.2px;line-height:17px;color:#444;transform:scaleX(0.9300);">95</div>
<div class="b" style="left:0px;top:911px;width:25px;height:1px;background:linear-gradient(90deg,#F0F0F0,#D6D6D6);"></div>
<div class="b" style="left:26px;top:912px;width:150px;height:19px;background:#F2F2F2;"></div>
<div class="b" style="left:177px;top:912px;width:150px;height:19px;background:#F2F2F2;"></div>
<div class="b" style="left:328px;top:912px;width:183px;height:19px;background:#F2F2F2;"></div>
<div class="b" style="left:512px;top:912px;width:593px;height:19px;background:#F2F2F2;"></div>
<div class="b" style="left:1106px;top:912px;width:338px;height:19px;background:#F2F2F2;"></div>
<div class="t" style="left:6.07px;top:914px;font-size:13.2px;line-height:17px;color:#444;transform:scaleX(0.9300);">96</div>
<div class="b" style="left:0px;top:931px;width:25px;height:1px;background:linear-gradient(90deg,#F0F0F0,#D6D6D6);"></div>
<div class="t" style="left:225.95px;top:913px;font-size:14.0px;line-height:18px;color:#000;transform:scaleX(0.9450);">12/30/26</div>
<div class="t" style="left:330.40px;top:913px;font-size:14.0px;line-height:18px;color:#000;transform:scaleX(0.9665);">Sarah Vinyard</div>
<div class="t" style="left:514.40px;top:913px;font-size:14.0px;line-height:18px;color:#000;transform:scaleX(0.9573);">Don't take FSA deduction on 12/30/26 bc it started one pay too early??</div>
<div class="b" style="left:26px;top:932px;width:150px;height:19px;background:#F2F2F2;"></div>
<div class="b" style="left:177px;top:932px;width:150px;height:19px;background:#F2F2F2;"></div>
<div class="b" style="left:328px;top:932px;width:183px;height:19px;background:#F2F2F2;"></div>
<div class="b" style="left:512px;top:932px;width:593px;height:19px;background:#F2F2F2;"></div>
<div class="b" style="left:1106px;top:932px;width:338px;height:19px;background:#F2F2F2;"></div>
<div class="t" style="left:6.07px;top:934px;font-size:13.2px;line-height:17px;color:#444;transform:scaleX(0.9300);">97</div>
<div class="b" style="left:0px;top:951px;width:25px;height:1px;background:linear-gradient(90deg,#F0F0F0,#D6D6D6);"></div>
<div class="t" style="left:225.95px;top:933px;font-size:14.0px;line-height:18px;color:#000;transform:scaleX(0.9450);">12/30/26</div>
<div class="t" style="left:330.40px;top:933px;font-size:14.0px;line-height:18px;color:#000;transform:scaleX(0.9858);">Christine Papscun</div>
<div class="t" style="left:514.40px;top:933px;font-size:14.0px;line-height:18px;color:#000;transform:scaleX(0.9573);">Don't take FSA deduction on 12/30/26 bc it started one pay too early??</div>
<div class="b" style="left:26px;top:952px;width:150px;height:19px;background:#F2F2F2;"></div>
<div class="b" style="left:177px;top:952px;width:150px;height:19px;background:#F2F2F2;"></div>
<div class="b" style="left:328px;top:952px;width:183px;height:19px;background:#F2F2F2;"></div>
<div class="b" style="left:512px;top:952px;width:593px;height:19px;background:#F2F2F2;"></div>
<div class="b" style="left:1106px;top:952px;width:338px;height:19px;background:#F2F2F2;"></div>
<div class="t" style="left:6.07px;top:954px;font-size:13.2px;line-height:17px;color:#444;transform:scaleX(0.9300);">98</div>
<div class="b" style="left:0px;top:971px;width:25px;height:1px;background:linear-gradient(90deg,#F0F0F0,#D6D6D6);"></div>
<div class="t" style="left:225.95px;top:953px;font-size:14.0px;line-height:18px;color:#000;transform:scaleX(0.9450);">12/30/26</div>
<div class="t" style="left:330.40px;top:953px;font-size:14.0px;line-height:18px;color:#000;transform:scaleX(0.9613);">Jessica Johnson</div>
<div class="t" style="left:514.40px;top:953px;font-size:14.0px;line-height:18px;color:#000;transform:scaleX(0.9573);">Don't take FSA deduction on 12/30/26 bc it started one pay too early??</div>
<div class="b" style="left:26px;top:972px;width:150px;height:6px;background:#F2F2F2;"></div>
<div class="b" style="left:177px;top:972px;width:150px;height:6px;background:#F2F2F2;"></div>
<div class="b" style="left:328px;top:972px;width:183px;height:6px;background:#F2F2F2;"></div>
<div class="b" style="left:512px;top:972px;width:593px;height:6px;background:#F2F2F2;"></div>
<div class="b" style="left:1106px;top:972px;width:338px;height:6px;background:#F2F2F2;"></div>
<div class="b" style="left:0px;top:532px;width:25px;height:39px;background:#E1E1E1;"></div>
<div class="b" style="left:24px;top:531px;width:2px;height:41px;background:#107C41;"></div>
<div class="t" style="left:6.07px;top:554px;font-size:13.2px;line-height:17px;color:#1A1AFF;transform:scaleX(0.9300);">80</div>
<div class="t" style="left:1108.00px;top:373px;font-size:14.0px;line-height:18px;color:#000;transform:scaleX(0.9052);">SCA Employee in ADP</div>
<div class="b" style="left:510px;top:530px;width:597px;height:43px;border:2px solid #1A7343;box-sizing:border-box;"></div>
<div class="b" style="left:512px;top:532px;width:593px;height:39px;border:1px solid #fff;box-sizing:border-box;"></div>
<div class="b" style="left:1102px;top:568px;width:6px;height:6px;background:#fff;"></div>
<div class="b" style="left:1103px;top:569px;width:5px;height:5px;background:#1A7343;"></div>
<div class="b" style="left:1106px;top:393px;width:203px;height:3px;background:#E8E8E8;"></div>
<div class="b" style="left:1106px;top:396px;width:203px;height:13px;background:#fff;"></div>
<div class="b" style="left:1106px;top:409px;width:203px;height:6px;background:#E8E8E8;"></div>
<div class="b" style="left:1106px;top:412px;width:203px;height:1px;background:#DEDEDE;"></div>
<div class="b" style="left:1106px;top:415px;width:203px;height:14px;background:#fff;"></div>
<div class="b" style="left:1106px;top:429px;width:203px;height:1px;background:#E8E8E8;"></div>
<div class="t" style="left:1110.00px;top:399px;font-size:5px;line-height:6px;color:#5A78C8;transform:scaleX(1.1278);">DEN - DEN PRE TAX</div>
<div class="t" style="left:1289.10px;top:399px;font-size:5.2px;line-height:7px;color:#333;font-weight:bold;transform:scaleX(1.2450);">6.86</div>
<div class="t" style="left:1110.00px;top:419px;font-size:5px;line-height:6px;color:#5A78C8;transform:scaleX(1.1864);">MED - Health Insuranc</div>
<div class="t" style="left:1285.90px;top:419px;font-size:5.2px;line-height:7px;color:#333;font-weight:bold;transform:scaleX(1.2142);">24.52</div>
<!-- bottom -->
<div class="b" style="left:0px;top:978px;width:1920px;height:32px;background:#F0F0F0;"></div>
<div class="b" style="left:0px;top:978px;width:1899px;height:1px;background:#E2E2E2;"></div>
<svg class="b" style="left:27px;top:988px;" width="10" height="11" viewBox="0 0 10 11"><path d="M7 1L2.400 5.500L7 10" fill="none" stroke="#ABABAB" stroke-width="1.200"/></svg>
<svg class="b" style="left:58.5px;top:988px;" width="10" height="11" viewBox="0 0 10 11"><path d="M3 1L7.600 5.500L3 10" fill="none" stroke="#8A8A8A" stroke-width="1.200"/></svg>
<div class="b" style="left:115.7px;top:978px;width:118.3px;height:28px;background:#fff;border-radius:4px 4px 6px 6px;box-shadow:0 1px 2px rgba(0,0,0,0.18);"></div>
<div class="t" style="left:124.00px;top:984px;font-size:13.0px;line-height:16px;color:#1a1a1a;transform:scaleX(1.0616);-webkit-text-stroke:0.300px #1a1a1a;">CompOne (U4F)</div>
<div class="b" style="left:124px;top:1001px;width:102px;height:2px;background:#107C41;"></div>
<div class="t" style="left:252.50px;top:987px;font-size:13.0px;line-height:16px;color:#333;transform:scaleX(0.9883);">FDI (NR2-TXU)</div>
<div class="t" style="left:371.00px;top:987px;font-size:13.0px;line-height:16px;color:#333;transform:scaleX(1.0258);">HAA (6Y7)</div>
<div class="t" style="left:461.00px;top:987px;font-size:13.0px;line-height:16px;color:#333;transform:scaleX(0.9488);">IME (FJV)</div>
<div class="t" style="left:545.00px;top:987px;font-size:13.0px;line-height:16px;color:#333;transform:scaleX(0.9868);">MAI (RPC)</div>
<div class="t" style="left:635.50px;top:987px;font-size:13.0px;line-height:16px;color:#333;transform:scaleX(0.9579);">MAI (RES)</div>
<div class="t" style="left:724.50px;top:987px;font-size:13.0px;line-height:16px;color:#333;transform:scaleX(1.0444);">Rizikon (M9H)</div>
<div class="t" style="left:839.50px;top:987px;font-size:13.0px;line-height:16px;color:#333;transform:scaleX(0.9878);">SCA (M9F)</div>
<div class="t" style="left:932.00px;top:987px;font-size:13.0px;line-height:16px;color:#333;">Startech (PCT)</div>
<div class="t" style="left:1183.00px;top:987px;font-size:13.0px;line-height:16px;color:#333;transform:scaleX(1.0531);">Emily Dawood</div>
<div class="t" style="left:1300.00px;top:987px;font-size:13.0px;line-height:16px;color:#333;transform:scaleX(1.0115);">Larry Chessler</div>
<div class="t" style="left:1410.00px;top:987px;font-size:13.0px;line-height:16px;color:#333;transform:scaleX(1.0072);">Sheet1</div>
<div class="b" style="left:1037px;top:982.5px;width:128px;height:23px;background:#A4000F;border-radius:4px;"></div>
<div class="t" style="left:1047.50px;top:987px;font-size:13.0px;line-height:16px;color:#fff;transform:scaleX(1.0478);">Benefit Premiums</div>
<div class="b" style="left:238.5px;top:985.5px;width:1px;height:17px;background:#CFCFCF;"></div>
<div class="b" style="left:356.5px;top:985.5px;width:1px;height:17px;background:#CFCFCF;"></div>
<div class="b" style="left:447.3px;top:985.5px;width:1px;height:17px;background:#CFCFCF;"></div>
<div class="b" style="left:531px;top:985.5px;width:1px;height:17px;background:#CFCFCF;"></div>
<div class="b" style="left:621.5px;top:985.5px;width:1px;height:17px;background:#CFCFCF;"></div>
<div class="b" style="left:709.5px;top:985.5px;width:1px;height:17px;background:#CFCFCF;"></div>
<div class="b" style="left:825px;top:985.5px;width:1px;height:17px;background:#CFCFCF;"></div>
<div class="b" style="left:918px;top:985.5px;width:1px;height:17px;background:#CFCFCF;"></div>
<div class="b" style="left:1032.3px;top:985.5px;width:1px;height:17px;background:#CFCFCF;"></div>
<div class="b" style="left:1169px;top:985.5px;width:1px;height:17px;background:#CFCFCF;"></div>
<div class="b" style="left:1285.5px;top:985.5px;width:1px;height:17px;background:#CFCFCF;"></div>
<div class="b" style="left:1398.5px;top:985.5px;width:1px;height:17px;background:#CFCFCF;"></div>
<div class="b" style="left:1465px;top:985.5px;width:1px;height:17px;background:#CFCFCF;"></div>
<svg class="b" style="left:1506.5px;top:987.5px;" width="12" height="12" viewBox="0 0 12 12"><path d="M6 0.500V11.500M0.500 6H11.500" stroke="#333" stroke-width="1.200"/></svg>
<div class="b" style="left:1634px;top:990.3px;width:2px;height:2px;background:#333;border-radius:1px;"></div>
<div class="b" style="left:1634px;top:994px;width:2px;height:2px;background:#333;border-radius:1px;"></div>
<div class="b" style="left:1634px;top:997.7px;width:2px;height:2px;background:#333;border-radius:1px;"></div>
<div class="b" style="left:1651px;top:985px;width:247px;height:17px;background:#F6F6F6;border-radius:8.500px;"></div>
<div class="b" style="left:1668px;top:988.7px;width:199px;height:9.5px;background:#737373;border-radius:5px;"></div>
<div class="b" style="left:1901px;top:248.5px;width:17.5px;height:731.5px;background:#F5F5F5;border-radius:8.750px;"></div>
<div class="b" style="left:0px;top:1010px;width:1920px;height:22px;background:#F5F5F5;"></div>
<div class="b" style="left:0px;top:1009.5px;width:1920px;height:1px;background:#EAEAEA;"></div>
<div class="t" style="left:12.50px;top:1014px;font-size:11.8px;line-height:15px;color:#333;transform:scaleX(0.8942);">Ready</div>
<div class="t" style="left:58.00px;top:1015px;font-size:11.8px;line-height:15px;color:#333;transform:scaleX(0.9946);">Filter Mode</div>
<svg class="b" style="left:168px;top:1013px;" width="16" height="16" viewBox="0 0 16 16"><circle cx="7" cy="2.800" r="1.700" fill="none" stroke="#222" stroke-width="1"/><path d="M1.500 5.200C4 6.600 10 6.600 12.500 5.200" fill="none" stroke="#222" stroke-width="1"/><path d="M5.200 6.400V10L3 14.500M8.800 6.400V10L9.400 11.200M5.200 10H8.800" fill="none" stroke="#222" stroke-width="1"/><path d="M9.800 10.500L14.500 15.200M14.500 10.500L9.800 15.200" stroke="#222" stroke-width="1.100"/></svg>
<div class="t" style="left:187.50px;top:1014px;font-size:11.8px;line-height:15px;color:#222;transform:scaleX(0.9813);-webkit-text-stroke:0.350px #222;">Accessibility: Investigate</div>
<div class="b" style="left:1620px;top:1011px;width:40px;height:21px;background:#DDDDDD;"></div>
<svg class="b" style="left:1632.5px;top:1014px;" width="14" height="14" viewBox="0 0 14 14"><rect x="0.750" y="0.750" width="12.500" height="12.500" fill="none" stroke="#222" stroke-width="1.100"/><path d="M4.900 0.750V13.250M9.100 0.750V13.250M0.750 4.900H13.250M0.750 9.100H13.250" stroke="#222" stroke-width="1"/></svg>
<svg class="b" style="left:1672.5px;top:1014px;" width="15" height="14" viewBox="0 0 15 14"><rect x="0.750" y="0.750" width="13.500" height="12.500" fill="none" stroke="#222" stroke-width="1.100"/><rect x="3.600" y="3.400" width="7.800" height="7.200" fill="none" stroke="#222" stroke-width="1"/><path d="M5.200 5.800H9.800M5.200 8.200H9.800" stroke="#222" stroke-width="0.900"/></svg>
<svg class="b" style="left:1712.5px;top:1014px;" width="15" height="14" viewBox="0 0 15 14"><rect x="0.750" y="0.750" width="13.500" height="12.500" fill="none" stroke="#222" stroke-width="1.100"/><path d="M4.800 0.750V7H10.200V0.750M7.500 0.750V7" fill="none" stroke="#222" stroke-width="1"/></svg>
<div class="b" style="left:1746px;top:1020.5px;width:8px;height:1px;background:#333;"></div>
<div class="b" style="left:1759px;top:1020.8px;width:100px;height:1px;background:#8A8A8A;"></div>
<div class="b" style="left:1807px;top:1016px;width:5px;height:11px;background:#5A5A5A;"></div>
<svg class="b" style="left:1863.5px;top:1016.5px;" width="9" height="9" viewBox="0 0 9 9"><path d="M4.500 0.500V8.500M0.500 4.500H8.500" stroke="#333" stroke-width="0.900"/></svg>
<div class="t" style="left:1886.00px;top:1014px;font-size:12px;line-height:15px;color:#333;transform:scaleX(0.8471);">100%</div>
<div class="b" style="left:0px;top:1032px;width:1920px;height:1px;background:#C9C9C9;"></div>
<!-- taskbar -->
<div class="b" style="left:0px;top:1033px;width:1920px;height:47px;background:#EEEEEE;"></div>
<svg class="b" style="left:20px;top:1044px;" width="26" height="24" viewBox="0 0 26 24"><defs><linearGradient id="sun" x1="0" y1="0" x2="1" y2="1"><stop offset="0" stop-color="#FFC83D"/><stop offset="1" stop-color="#F7931E"/></linearGradient><linearGradient id="cl" x1="0" y1="0" x2="0" y2="1"><stop offset="0" stop-color="#F4F8FF"/><stop offset="1" stop-color="#B9CFF2"/></linearGradient></defs><circle cx="11" cy="10" r="9.500" fill="url(#sun)"/><path d="M7.500 23.500A4 4 0 0 1 7 15.600A5.500 5.500 0 0 1 17.500 14.500A4.600 4.600 0 0 1 19.500 23.500Z" fill="url(#cl)"/></svg>
<div class="b" style="left:30px;top:1037.8px;width:16px;height:16px;background:#C42B1C;border-radius:8px;"></div><div class="t" style="left:34.80px;top:1039px;font-size:11.5px;line-height:14px;color:#fff;">1</div>
<div class="t" style="left:50.80px;top:1041px;font-size:11.8px;line-height:15px;color:#1f1f1f;transform:scaleX(0.9181);">36°F</div>
<div class="t" style="left:50.80px;top:1058px;font-size:11.8px;line-height:15px;color:#666;transform:scaleX(0.9934);">Partly sunny</div>
<svg class="b" style="left:550.5px;top:1044.5px;" width="24" height="24" viewBox="0 0 24 24"><defs><linearGradient id="wl" x1="0" y1="0" x2="1" y2="1"><stop offset="0" stop-color="#4CC9F5"/><stop offset="1" stop-color="#0A6FD6"/></linearGradient></defs><path d="M0.300 0.300H11.400V11.400H0.300ZM12.600 0.300H23.700V11.400H12.600ZM0.300 12.600H11.400V23.700H0.300ZM12.600 12.600H23.700V23.700H12.600Z" fill="url(#wl)"/></svg>
<div class="b" style="left:587.5px;top:1040px;width:219px;height:31.5px;background:#FAFAFA;border:1px solid #E1E1E1;border-bottom-color:#CFCFCF;border-radius:16px;box-sizing:border-box;"></div>
<svg class="b" style="left:597.5px;top:1047px;" width="17" height="17" viewBox="0 0 17 17"><circle cx="7" cy="7" r="5.300" fill="none" stroke="#222" stroke-width="1.700"/><path d="M11 11L15 15.300" stroke="#222" stroke-width="1.900" stroke-linecap="round"/></svg>
<div class="t" style="left:624.50px;top:1048px;font-size:13.8px;line-height:17px;color:#666;transform:scaleX(0.9262);">Search</div>
<svg class="b" style="left:818.5px;top:1044.5px;" width="25" height="23" viewBox="0 0 25 23"><defs><linearGradient id="tv" x1="0" y1="0" x2="1" y2="1"><stop offset="0" stop-color="#FFFFFF"/><stop offset="1" stop-color="#DCDCDC"/></linearGradient><linearGradient id="tv2" x1="0" y1="0" x2="1" y2="1"><stop offset="0" stop-color="#4A4A4A"/><stop offset="1" stop-color="#111"/></linearGradient></defs><rect x="7" y="0.500" width="17" height="15.500" rx="1.500" fill="url(#tv)" stroke="#E6E6E6" stroke-width="0.600"/><rect x="0.500" y="6.500" width="17.500" height="16" rx="1.500" fill="url(#tv2)"/><path d="M7 6.500H18V16H7Z" fill="#BDBDBD" opacity="0.900"/></svg>
<svg class="b" style="left:862.5px;top:1044.5px;" width="25" height="23" viewBox="0 0 25 23"><defs><linearGradient id="fe" x1="0" y1="0" x2="0" y2="1"><stop offset="0" stop-color="#FFE27A"/><stop offset="1" stop-color="#F7B928"/></linearGradient></defs><path d="M0.500 2.200A1.500 1.500 0 0 1 2 0.700H8.500L11 3.200H23A1.500 1.500 0 0 1 24.500 4.700V8H0.500Z" fill="#E9A21B"/><rect x="0.500" y="4.600" width="24" height="17.400" rx="1.600" fill="url(#fe)"/><path d="M4.500 22V17.500A1.500 1.500 0 0 1 6 16H19A1.500 1.500 0 0 1 20.500 17.500V22Z" fill="#1B7FD4"/><rect x="7" y="18.200" width="11" height="1.800" rx="0.900" fill="#0F5FA8"/></svg>
<div class="b" style="left:872.0px;top:1072px;width:6px;height:3px;background:#8A8A8A;border-radius:1.500px;"></div>
<svg class="b" style="left:906.5px;top:1043.5px;" width="25" height="25" viewBox="0 0 25 25"><defs><linearGradient id="ed1" x1="0" y1="0" x2="1" y2="0.300"><stop offset="0" stop-color="#1B6FC9"/><stop offset="0.600" stop-color="#35B6E6"/><stop offset="1" stop-color="#6FD96B"/></linearGradient><linearGradient id="ed2" x1="0" y1="0" x2="0" y2="1"><stop offset="0" stop-color="#1560B0"/><stop offset="1" stop-color="#0C3F86"/></linearGradient></defs><circle cx="12.500" cy="12.500" r="12" fill="url(#ed1)"/><path d="M1.200 16C0 8 7 3.500 13 5.500C18 7 20 11 18.500 14.500C17.500 16.500 14.500 16.500 14.800 14C15.500 10.500 11 8.500 7.500 11C3.500 14 5 21 11 24.200C6 24 2 20.500 1.200 16Z" fill="url(#ed2)"/><path d="M14.800 14C14.500 16.500 17.500 17 19.500 15.500C22 13.700 24.200 14 24.300 15C23 20.500 18.500 24.500 12.500 24.500C10 22 8.500 18 10.500 14.500C11.500 12.800 15 12 14.800 14Z" fill="#E9F6FB" opacity="0.920"/><rect x="1" y="15.500" width="11" height="8.500" rx="1" fill="#B3621B"/><rect x="1" y="15.500" width="11" height="3.600" rx="1" fill="#8E4A12"/><path d="M4.500 15.500V14.300A0.800 0.800 0 0 1 5.300 13.500H7.700A0.800 0.800 0 0 1 8.500 14.300V15.500" fill="none" stroke="#8E4A12" stroke-width="1"/><rect x="5.600" y="18.200" width="1.800" height="1.800" fill="#F7C77A"/></svg>
<div class="b" style="left:915.8px;top:1072px;width:6px;height:3px;background:#8A8A8A;border-radius:1.500px;"></div>
<svg class="b" style="left:950.5px;top:1043.5px;" width="24" height="25" viewBox="0 0 24 25"><circle cx="9" cy="6" r="3.600" fill="#7B83EB"/><circle cx="17.500" cy="7.500" r="2.600" fill="#5059C9"/><path d="M14 11H22.500A1.200 1.200 0 0 1 23.700 12.200V17.500A4.200 4.200 0 0 1 15.500 19Z" fill="#5059C9"/><path d="M4.500 11H15.500A1.200 1.200 0 0 1 16.700 12.200V19A6 6 0 0 1 4.700 19Z" fill="#7B83EB"/><rect x="0.500" y="9.500" width="11" height="11" rx="1.200" fill="#4B53BC"/><path d="M3.600 12.500H8.400M6 12.500V18" stroke="#fff" stroke-width="1.400"/></svg>
<div class="b" style="left:963.8px;top:1039px;width:16px;height:16px;background:#C42B1C;border-radius:8px;"></div><div class="t" style="left:968.60px;top:1040px;font-size:11.5px;line-height:14px;color:#fff;">1</div>
<div class="b" style="left:959.5px;top:1072px;width:6px;height:3px;background:#8A8A8A;border-radius:1.500px;"></div>
<svg class="b" style="left:994.5px;top:1044px;" width="25" height="25" viewBox="0 0 25 25"><defs><linearGradient id="rd" x1="0" y1="0" x2="1" y2="1"><stop offset="0" stop-color="#5AA9F0"/><stop offset="1" stop-color="#1746B8"/></linearGradient></defs><path d="M2.500 1L18.500 3.500L17 16.500L1 13.500Z" fill="url(#rd)" stroke="#C9CED6" stroke-width="0.800"/><path d="M4 3L9 3.800L11.500 12L3 10.500Z" fill="#0C2A8A" opacity="0.550"/><path d="M6 15.500L12 16.500L12.500 19.500L5 19Z" fill="#B9BEC6"/><path d="M2.500 19.500L15.500 20.500L15 22.500L2 21.500Z" fill="#D5D9DF"/><circle cx="18.500" cy="18.500" r="5.600" fill="#D8DBD8" stroke="#9BA09B" stroke-width="0.800"/><path d="M17.800 16.500L15.800 18.500L17.800 20.500M19.800 15.500L21.800 17.500L19.800 19.500" fill="none" stroke="#2E8B2E" stroke-width="1.300"/></svg>
<svg class="b" style="left:1038.5px;top:1044px;" width="25" height="25" viewBox="0 0 25 25"><circle cx="12.500" cy="12.500" r="11.400" fill="#fff" stroke="#1766C2" stroke-width="1.700"/><path d="M19.600 8.600A8 8 0 1 0 19.600 16.400" fill="none" stroke="#1766C2" stroke-width="3.400"/><path d="M15 12.500H21.500" stroke="#fff" stroke-width="1.200"/></svg>
<svg class="b" style="left:1082.5px;top:1043.5px;" width="25" height="25" viewBox="0 0 25 25"><circle cx="12.500" cy="12.500" r="12" fill="#fff"/><path d="M12.500 0.500A12 12 0 0 1 22.900 6.500H12.500A6 6 0 0 0 7.300 9.500L2.100 6.500A12 12 0 0 1 12.500 0.500Z" fill="#EA4335"/><path d="M22.900 6.500A12 12 0 0 1 12.500 24.500L17.700 15.500A6 6 0 0 0 17.700 9.500L12.500 6.500Z" fill="#FBBC04"/><path d="M2.100 6.500L7.300 15.500A6 6 0 0 0 12.500 18.500H17.700L12.500 24.500A12 12 0 0 1 2.100 6.500Z" fill="#34A853"/><path d="M12.500 18.500A6 6 0 0 0 17.700 15.500L12.500 24.500Z" fill="#FBBC04"/><circle cx="12.500" cy="12.500" r="5.600" fill="#fff"/><circle cx="12.500" cy="12.500" r="4.500" fill="#4285F4"/></svg>
<div class="b" style="left:1092.0px;top:1072px;width:6px;height:3px;background:#8A8A8A;border-radius:1.500px;"></div>
<svg class="b" style="left:1126.5px;top:1044.5px;" width="25" height="23" viewBox="0 0 25 23"><defs><linearGradient id="ol" x1="0" y1="0" x2="1" y2="1"><stop offset="0" stop-color="#35B8F1"/><stop offset="1" stop-color="#0F6CBD"/></linearGradient></defs><path d="M7 6L16 0.500L24.500 6V19A2.500 2.500 0 0 1 22 21.500H9.500A2.500 2.500 0 0 1 7 19Z" fill="url(#ol)"/><path d="M7 6L16 0.500L24.500 6L16 12Z" fill="#1E55B3" opacity="0.850"/><path d="M10 5.500L21 3V13L13 16Z" fill="#6FD0F6" opacity="0.850"/><path d="M24.500 8L12 21.500H22A2.500 2.500 0 0 0 24.500 19Z" fill="#1490DF"/><rect x="0.500" y="9.500" width="11.500" height="11.500" rx="2" fill="#0F6CBD"/><circle cx="6.250" cy="15.250" r="2.900" fill="none" stroke="#fff" stroke-width="1.600"/></svg>
<div class="b" style="left:1135.8px;top:1072px;width:6px;height:3px;background:#8A8A8A;border-radius:1.500px;"></div>
<svg class="b" style="left:1170.5px;top:1044.5px;" width="24" height="23" viewBox="0 0 24 23"><rect x="5" y="0.500" width="18" height="21.500" rx="2.200" fill="#CA64EA"/><path d="M17 0.500H20.800A2.200 2.200 0 0 1 23 2.700V7.500H17Z" fill="#E8A6F7"/><rect x="17" y="7.500" width="6" height="7" fill="#AE4BD5"/><path d="M17 14.500H23V19.800A2.200 2.200 0 0 1 20.800 22H17Z" fill="#9332BF"/><rect x="0.500" y="9" width="12" height="12" rx="1.600" fill="#7719AA"/><path d="M4 18.500V11.500L9 18.500V11.500" fill="none" stroke="#fff" stroke-width="1.500"/></svg>
<div class="b" style="left:1179.0px;top:1072px;width:6px;height:3px;background:#8A8A8A;border-radius:1.500px;"></div>
<svg class="b" style="left:1215.5px;top:1045.5px;" width="22" height="22" viewBox="0 0 22 22"><rect x="0" y="0" width="22" height="22" rx="5" fill="#3A148C"/><rect x="1.500" y="1.500" width="19" height="19" rx="4" fill="#4B1DB0"/><circle cx="11" cy="10.500" r="5.200" fill="none" stroke="#fff" stroke-width="2.200"/><path d="M13 13L17 17.500" stroke="#fff" stroke-width="2.400"/><circle cx="5" cy="5" r="0.900" fill="#fff"/><circle cx="17.500" cy="6" r="0.700" fill="#fff"/><circle cx="5.500" cy="17" r="0.700" fill="#fff"/><path d="M9.500 10.500L11 8L12.500 10.500L11 12.500Z" fill="#fff"/></svg>
<div class="b" style="left:1223.8px;top:1072px;width:6px;height:3px;background:#8A8A8A;border-radius:1.500px;"></div>
<div class="b" style="left:1280px;top:1036.5px;width:10.5px;height:38.5px;background:#F4F4F4;border-radius:0 5px 5px 0;border:1px solid #E3E3E3;border-left:none;box-sizing:border-box;"></div>
<div class="b" style="left:1252px;top:1036.5px;width:34.5px;height:38.5px;background:#F8F8F8;border:1px solid #E3E3E3;border-radius:5px;box-sizing:border-box;"></div>
<svg class="b" style="left:1258.5px;top:1044.5px;" width="23" height="23" viewBox="0 0 23 23"><defs><linearGradient id="xb" x1="0" y1="0" x2="1" y2="1"><stop offset="0" stop-color="#3A9C45"/><stop offset="1" stop-color="#1B6A30"/></linearGradient><linearGradient id="xt" x1="0" y1="0" x2="0" y2="1"><stop offset="0" stop-color="#8BE35F"/><stop offset="1" stop-color="#5FC650"/></linearGradient></defs>
<rect x="3.500" y="0.300" width="18.200" height="22" rx="2.600" fill="url(#xb)"/>
<path d="M3.500 2.900A2.600 2.600 0 0 1 6.100 0.300H12.600V7.300H3.500Z" fill="url(#xt)"/>
<path d="M12.600 0.300H19.100A2.600 2.600 0 0 1 21.700 2.900V7.300H12.600Z" fill="#93E56C"/>
<path d="M12.600 7.300H21.700V9H12.600Z" fill="#2F8A3C" opacity="0.500"/>
<rect x="0.500" y="9.500" width="10.400" height="10.400" rx="1.800" fill="#1C7043"/>
<path d="M3.500 12.200L7.900 17.300M7.900 12.200L3.500 17.300" stroke="#fff" stroke-width="1.500"/></svg>
<div class="b" style="left:1263px;top:1072px;width:16px;height:3px;background:#0F6CD6;border-radius:1.500px;"></div>
<svg class="b" style="left:1305.5px;top:1044px;" width="19" height="25" viewBox="0 0 19 25"><rect x="0.500" y="0.500" width="18" height="24" rx="1.500" fill="#6E7681"/><rect x="2.200" y="2.500" width="14.600" height="4.500" fill="#35B8F1"/><g fill="#D9DDE2"><rect x="2.200" y="9" width="4" height="3.600"/><rect x="7.500" y="9" width="4" height="3.600"/><rect x="2.200" y="14" width="4" height="3.600"/><rect x="7.500" y="14" width="4" height="3.600"/><rect x="2.200" y="19" width="4" height="3.600"/><rect x="7.500" y="19" width="4" height="3.600"/><rect x="12.800" y="9" width="4" height="3.600"/></g><rect x="12.800" y="14" width="4" height="8.600" fill="#1766C2"/></svg>
<div class="b" style="left:1311.8px;top:1072px;width:6px;height:3px;background:#8A8A8A;border-radius:1.500px;"></div>
<svg class="b" style="left:1347.5px;top:1045px;" width="23" height="22" viewBox="0 0 23 22"><rect x="0.500" y="0.500" width="22" height="21" rx="4.500" fill="#B30B00"/><path d="M11 4.800C9.800 4.800 10.200 8.500 11.200 11.200C12.600 14 15.600 14.600 17.400 13.600M11 4.800C12.200 4.800 11.900 8.500 10.900 11.200C9.600 14.200 7.400 16.200 6 16.800M6 16.800C4.800 17.200 5.200 15.600 7 14.600C10 13 14.500 12.600 17.400 13.600M17.400 13.600C18.800 14.200 17.800 15.200 16.400 14.600" fill="none" stroke="#fff" stroke-width="1.150" stroke-linecap="round" stroke-linejoin="round"/></svg>
<div class="b" style="left:1355.8px;top:1072px;width:6px;height:3px;background:#8A8A8A;border-radius:1.500px;"></div>
<svg class="b" style="left:1698.5px;top:1051px;" width="13" height="9" viewBox="0 0 13 9"><path d="M1.500 7L6.500 2L11.500 7" fill="none" stroke="#222" stroke-width="1.500" stroke-linecap="round" stroke-linejoin="round"/></svg>
<svg class="b" style="left:1730px;top:1047.5px;" width="14" height="18" viewBox="0 0 14 18"><rect x="4" y="1" width="6" height="10" rx="3" fill="none" stroke="#2B62C9" stroke-width="1.400"/><path d="M1.500 8.500A5.500 5.500 0 0 0 12.500 8.500M7 14V16.500" fill="none" stroke="#2B62C9" stroke-width="1.400" stroke-linecap="round"/></svg>
<svg class="b" style="left:1760px;top:1049px;" width="18" height="14" viewBox="0 0 18 14"><path d="M1 5A11.500 11.500 0 0 1 17 5" fill="none" stroke="#222" stroke-width="1.300" stroke-linecap="round"/><path d="M3.500 7.800A8 8 0 0 1 14.500 7.800" fill="none" stroke="#222" stroke-width="1.300" stroke-linecap="round"/><path d="M6 10.500A4.300 4.300 0 0 1 12 10.500" fill="none" stroke="#222" stroke-width="1.300" stroke-linecap="round"/><circle cx="9" cy="12.600" r="1.100" fill="#222"/></svg>
<svg class="b" style="left:1784px;top:1048.5px;" width="18" height="15" viewBox="0 0 18 15"><path d="M1 5.200H3.800L7.500 2V13L3.800 9.800H1Z" fill="none" stroke="#222" stroke-width="1.200" stroke-linejoin="round"/><path d="M9.800 5.300A3 3 0 0 1 9.800 9.700M11.800 3.500A5.600 5.600 0 0 1 11.800 11.500M13.900 1.800A8.200 8.200 0 0 1 13.900 13.200" fill="none" stroke="#222" stroke-width="1.100" stroke-linecap="round"/></svg>
<svg class="b" style="left:1808px;top:1047px;" width="23" height="17" viewBox="0 0 23 17"><rect x="1" y="5" width="18.500" height="10.500" rx="2.500" fill="none" stroke="#222" stroke-width="1.300"/><rect x="2.800" y="6.800" width="14.900" height="6.900" rx="1.200" fill="#107C10"/><path d="M20.500 8.500V12" stroke="#222" stroke-width="1.600" stroke-linecap="round"/><path d="M11.500 0.500L7.500 7.200H10.200L9 11.500L13 5.800H10.500Z" fill="#222" stroke="#EEE" stroke-width="0.700"/></svg>
<div class="t" style="left:1851.70px;top:1041px;font-size:11.8px;line-height:15px;color:#1f1f1f;transform:scaleX(0.9662);">12:15 PM</div>
<div class="t" style="left:1846.00px;top:1057px;font-size:11.8px;line-height:15px;color:#1f1f1f;transform:scaleX(1.0382);">3/24/2026</div>
</body></html>
